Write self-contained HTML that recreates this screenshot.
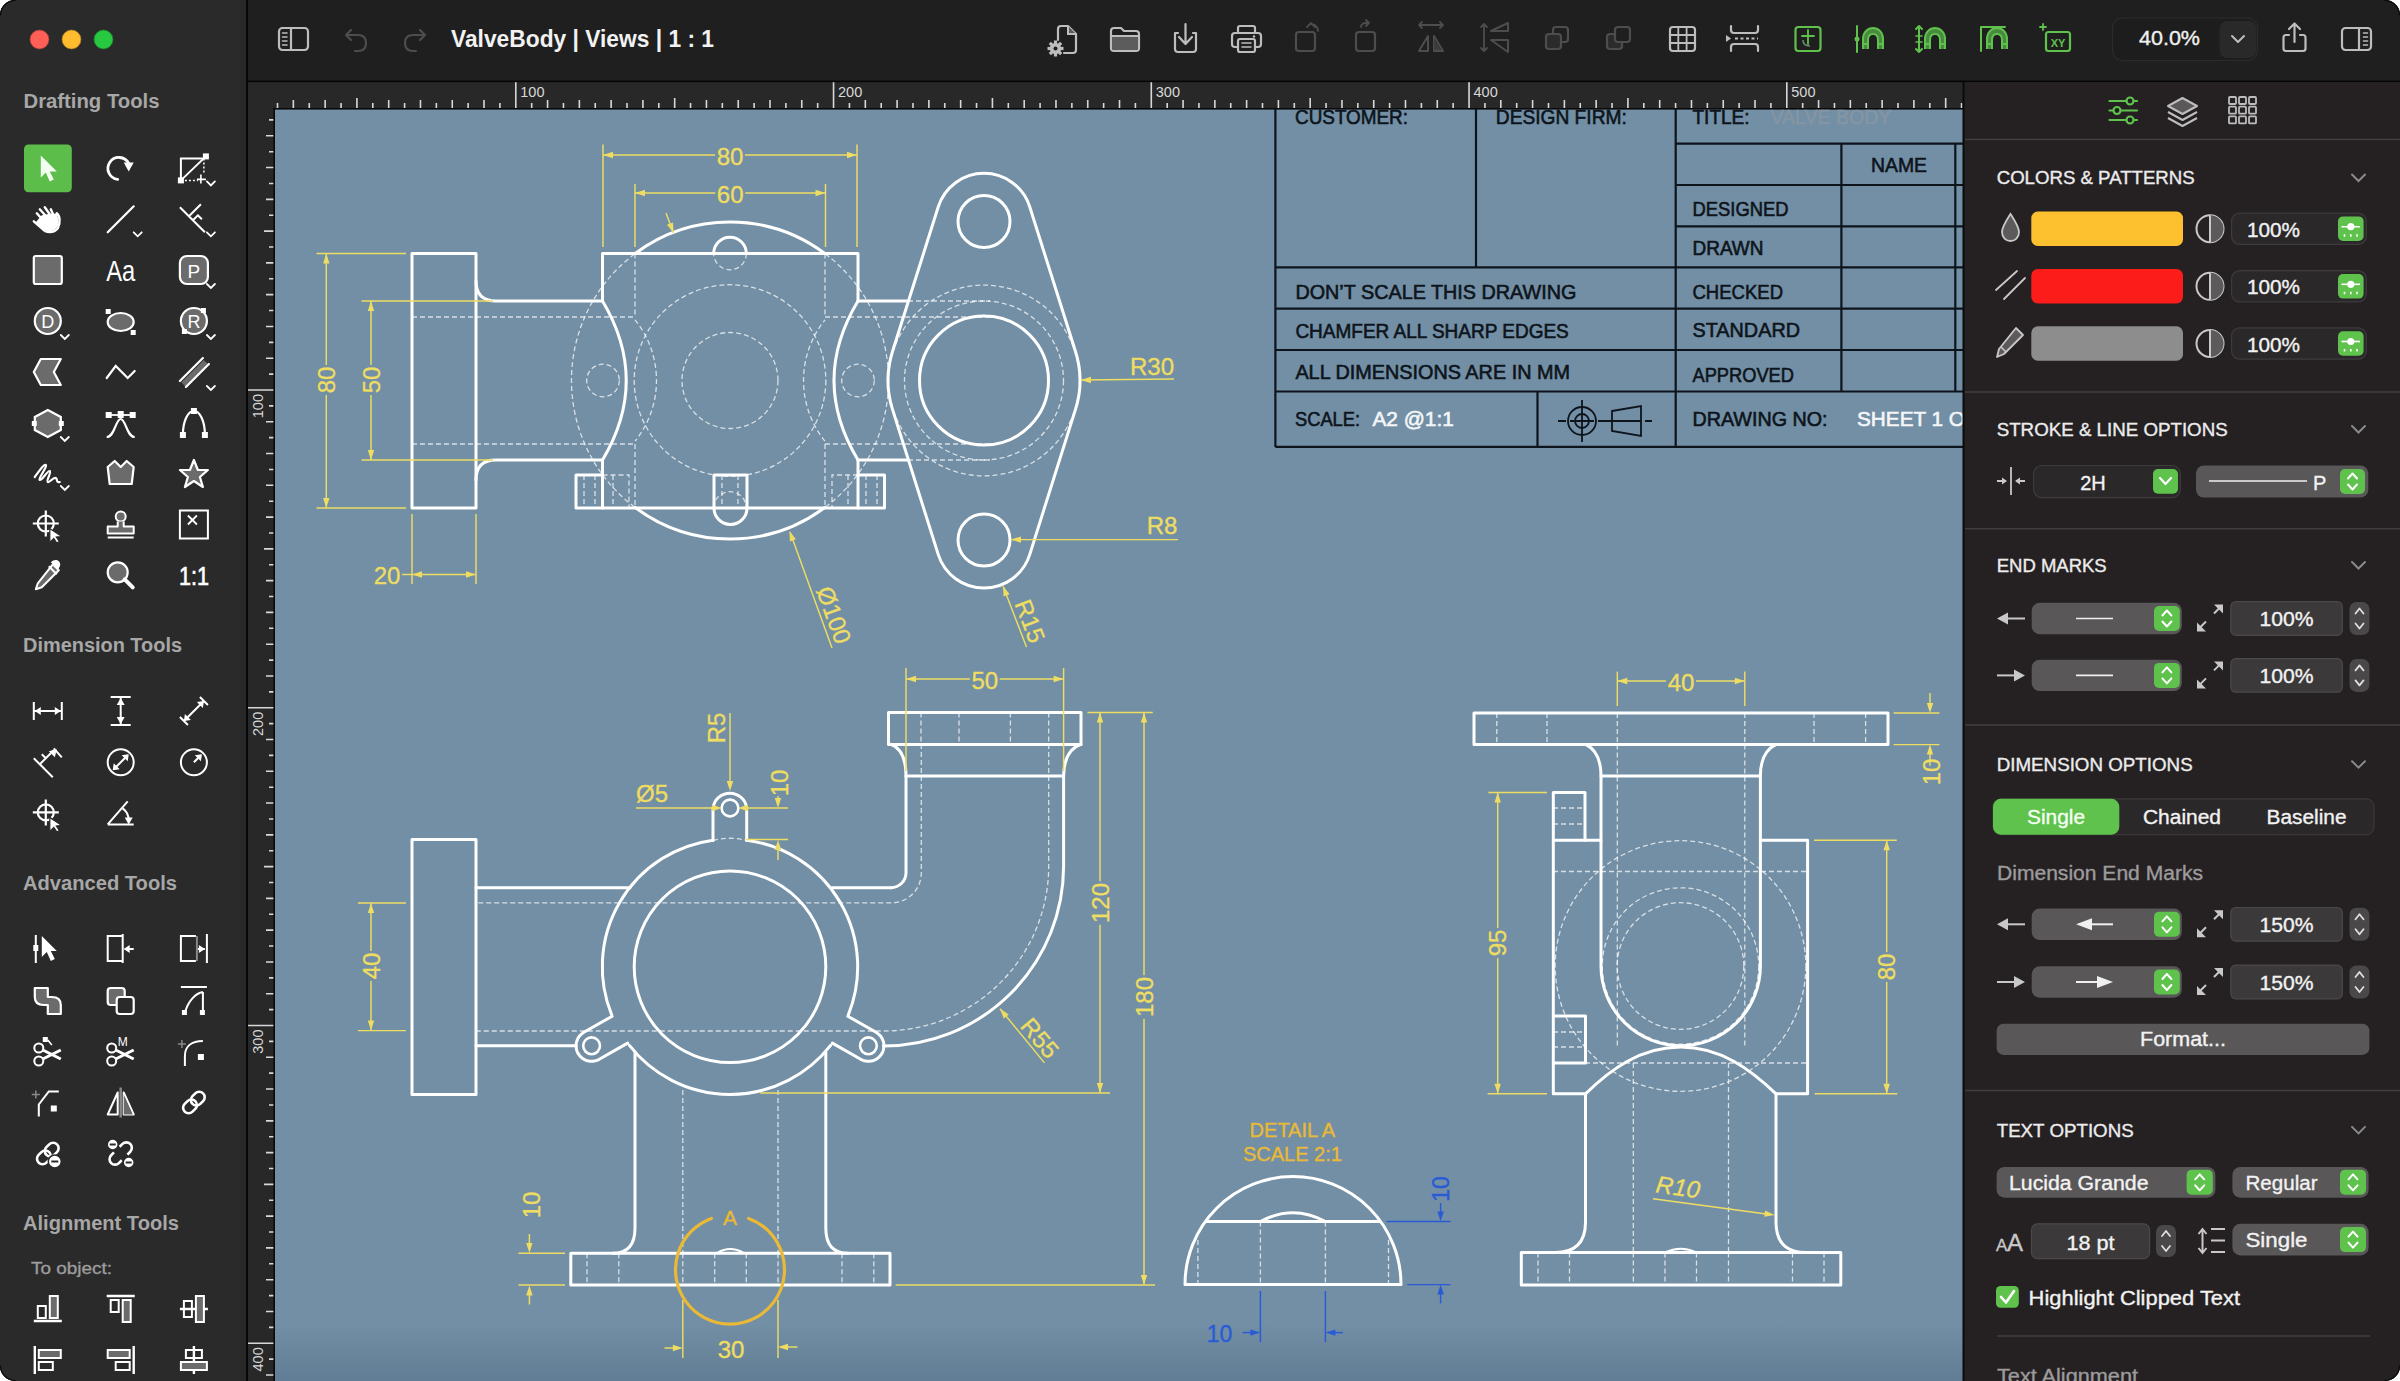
<!DOCTYPE html><html><head><meta charset="utf-8"><style>html,body{margin:0;padding:0;background:#fff;width:2400px;height:1381px;overflow:hidden}.d{stroke:rgba(255,255,255,0.72);stroke-width:1.3;stroke-dasharray:5 3;fill:none}svg,text{font-family:"Liberation Sans",sans-serif}</style></head><body><svg width="2400" height="1381" viewBox="0 0 2400 1381" font-family="Liberation Sans, sans-serif" style="display:block">
<defs><clipPath id="win"><rect x="0" y="0" width="2400" height="1381" rx="15"/></clipPath><linearGradient id="cg" x1="0" y1="0" x2="0" y2="1"><stop offset="0" stop-color="#728fa5"/><stop offset="0.955" stop-color="#728fa5"/><stop offset="1" stop-color="#607d95"/></linearGradient><clipPath id="cc"><rect x="275" y="109" width="1688" height="1272"/></clipPath></defs>
<rect width="2400" height="1381" fill="#fff"/>
<g clip-path="url(#win)">
<rect width="2400" height="1381" fill="#1f1f1f"/>
<rect x="247" y="82" width="1716" height="27" fill="#282828"/>
<rect x="247" y="82" width="28" height="1299" fill="#282828"/>
<rect x="275" y="109" width="1688" height="1272" fill="url(#cg)"/>
<text x="520.3" y="97.3" font-size="14.5" fill="#d8d8d8">100</text>
<text x="838.05" y="97.3" font-size="14.5" fill="#d8d8d8">200</text>
<text x="1155.8" y="97.3" font-size="14.5" fill="#d8d8d8">300</text>
<text x="1473.55" y="97.3" font-size="14.5" fill="#d8d8d8">400</text>
<text x="1791.3" y="97.3" font-size="14.5" fill="#d8d8d8">500</text>
<text x="0" y="0" font-size="14.5" fill="#d8d8d8" transform="translate(262.5 394) rotate(-90)" text-anchor="end">100</text>
<text x="0" y="0" font-size="14.5" fill="#d8d8d8" transform="translate(262.5 711.75) rotate(-90)" text-anchor="end">200</text>
<text x="0" y="0" font-size="14.5" fill="#d8d8d8" transform="translate(262.5 1029.5) rotate(-90)" text-anchor="end">300</text>
<text x="0" y="0" font-size="14.5" fill="#d8d8d8" transform="translate(262.5 1347.25) rotate(-90)" text-anchor="end">400</text>
<path d="M277.49 108V103 M293.37 108V100 M309.26 108V103 M325.15 108V100 M341.04 108V103 M356.92 108V98 M372.81 108V103 M388.7 108V100 M404.59 108V103 M420.47 108V100 M436.36 108V103 M452.25 108V100 M468.14 108V103 M484.02 108V100 M499.91 108V103 M515.8 108V82 M531.69 108V103 M547.57 108V100 M563.46 108V103 M579.35 108V100 M595.24 108V103 M611.12 108V100 M627.01 108V103 M642.9 108V100 M658.79 108V103 M674.67 108V98 M690.56 108V103 M706.45 108V100 M722.34 108V103 M738.22 108V100 M754.11 108V103 M770 108V100 M785.89 108V103 M801.77 108V100 M817.66 108V103 M833.55 108V82 M849.44 108V103 M865.32 108V100 M881.21 108V103 M897.1 108V100 M912.99 108V103 M928.87 108V100 M944.76 108V103 M960.65 108V100 M976.54 108V103 M992.42 108V98 M1008.31 108V103 M1024.2 108V100 M1040.09 108V103 M1055.97 108V100 M1071.86 108V103 M1087.75 108V100 M1103.64 108V103 M1119.52 108V100 M1135.41 108V103 M1151.3 108V82 M1167.19 108V103 M1183.07 108V100 M1198.96 108V103 M1214.85 108V100 M1230.74 108V103 M1246.62 108V100 M1262.51 108V103 M1278.4 108V100 M1294.29 108V103 M1310.17 108V98 M1326.06 108V103 M1341.95 108V100 M1357.84 108V103 M1373.72 108V100 M1389.61 108V103 M1405.5 108V100 M1421.39 108V103 M1437.27 108V100 M1453.16 108V103 M1469.05 108V82 M1484.94 108V103 M1500.82 108V100 M1516.71 108V103 M1532.6 108V100 M1548.49 108V103 M1564.38 108V100 M1580.26 108V103 M1596.15 108V100 M1612.04 108V103 M1627.92 108V98 M1643.81 108V103 M1659.7 108V100 M1675.59 108V103 M1691.47 108V100 M1707.36 108V103 M1723.25 108V100 M1739.14 108V103 M1755.02 108V100 M1770.91 108V103 M1786.8 108V82 M1802.69 108V103 M1818.57 108V100 M1834.46 108V103 M1850.35 108V100 M1866.24 108V103 M1882.12 108V100 M1898.01 108V103 M1913.9 108V100 M1929.79 108V103 M1945.67 108V98 M1961.56 108V103 M274 119.91H269 M274 135.8H266 M274 151.69H269 M274 167.57H266 M274 183.46H269 M274 199.35H266 M274 215.24H269 M274 231.12H264 M274 247.01H269 M274 262.9H266 M274 278.79H269 M274 294.67H266 M274 310.56H269 M274 326.45H266 M274 342.34H269 M274 358.22H266 M274 374.11H269 M274 390H247 M274 405.89H269 M274 421.77H266 M274 437.66H269 M274 453.55H266 M274 469.44H269 M274 485.32H266 M274 501.21H269 M274 517.1H266 M274 532.99H269 M274 548.88H264 M274 564.76H269 M274 580.65H266 M274 596.54H269 M274 612.42H266 M274 628.31H269 M274 644.2H266 M274 660.09H269 M274 675.98H266 M274 691.86H269 M274 707.75H247 M274 723.64H269 M274 739.52H266 M274 755.41H269 M274 771.3H266 M274 787.19H269 M274 803.07H266 M274 818.96H269 M274 834.85H266 M274 850.74H269 M274 866.62H264 M274 882.51H269 M274 898.4H266 M274 914.29H269 M274 930.17H266 M274 946.06H269 M274 961.95H266 M274 977.84H269 M274 993.72H266 M274 1009.61H269 M274 1025.5H247 M274 1041.39H269 M274 1057.28H266 M274 1073.16H269 M274 1089.05H266 M274 1104.94H269 M274 1120.83H266 M274 1136.71H269 M274 1152.6H266 M274 1168.49H269 M274 1184.38H264 M274 1200.26H269 M274 1216.15H266 M274 1232.04H269 M274 1247.92H266 M274 1263.81H269 M274 1279.7H266 M274 1295.59H269 M274 1311.47H266 M274 1327.36H269 M274 1343.25H247 M274 1359.14H269 M274 1375.02H266" stroke="#d8d8d8" stroke-width="1.6" fill="none"/>
<rect x="274" y="108" width="1689" height="1.6" fill="#0a0a0a"/>
<rect x="273.4" y="108" width="1.6" height="1273" fill="#0a0a0a"/>
<g clip-path="url(#cc)">
<g font-family="Liberation Sans, sans-serif">
<rect x="412" y="253.5" width="64" height="254.5" stroke="#ffffff" stroke-width="3" fill="none" stroke-linejoin="round"/>
<path d="M476 281 Q476 301 496 301 L602.5 301" stroke="#ffffff" stroke-width="3" fill="none" stroke-linejoin="round" stroke-linecap="round" />
<path d="M476 480 Q476 460 496 460 L602.5 460" stroke="#ffffff" stroke-width="3" fill="none" stroke-linejoin="round" stroke-linecap="round" />
<path d="M602.5 301 L602.5 253.5 L858 253.5 L858 301" stroke="#ffffff" stroke-width="3" fill="none" stroke-linejoin="round" stroke-linecap="round" />
<path d="M602.5 460 L602.5 508 L858 508 L858 460" stroke="#ffffff" stroke-width="3" fill="none" stroke-linejoin="round" stroke-linecap="round" />
<path d="M602.5 301 Q650 380.5 602.5 460" stroke="#ffffff" stroke-width="3" fill="none" stroke-linejoin="round" stroke-linecap="round" />
<path d="M858 301 Q810 380.5 858 460" stroke="#ffffff" stroke-width="3" fill="none" stroke-linejoin="round" stroke-linecap="round" />
<path d="M858 301 L908 301" stroke="#ffffff" stroke-width="3" fill="none" stroke-linejoin="round" stroke-linecap="round" />
<path d="M858 460 L908 460" stroke="#ffffff" stroke-width="3" fill="none" stroke-linejoin="round" stroke-linecap="round" />
<path d="M635.2 253.5A158.5 158.5 0 0 1 824.8 253.5" stroke="#ffffff" stroke-width="3" fill="none" stroke-linejoin="round" stroke-linecap="round" />
<path d="M824.8 507.5A158.5 158.5 0 0 1 635.2 507.5" stroke="#ffffff" stroke-width="3" fill="none" stroke-linejoin="round" stroke-linecap="round" />
<path d="M713.7 253.5A16.3 16.3 0 0 1 746.3 253.5" stroke="#ffffff" stroke-width="3" fill="none" stroke-linejoin="round" stroke-linecap="round" />
<path d="M746.3 253.5A16.3 16.3 0 0 1 713.7 253.5" class="d"/>
<path d="M714 508 L714 475 L747 475 L747 508 A16.5 16.5 0 0 1 714 508" stroke="#ffffff" stroke-width="3" fill="none" stroke-linejoin="round" stroke-linecap="round" />
<line x1="722" y1="475" x2="722" y2="508" class="d"/>
<line x1="738" y1="475" x2="738" y2="508" class="d"/>
<path d="M713.7 508A16.3 16.3 0 0 1 746.3 508" class="d"/>
<path d="M602.5 475 L576 475 L576 508 L602.5 508" stroke="#ffffff" stroke-width="3" fill="none" stroke-linejoin="round" stroke-linecap="round" />
<path d="M858 475 L884.5 475 L884.5 508 L858 508" stroke="#ffffff" stroke-width="3" fill="none" stroke-linejoin="round" stroke-linecap="round" />
<line x1="584" y1="475" x2="584" y2="508" class="d"/>
<line x1="595" y1="475" x2="595" y2="508" class="d"/>
<line x1="866" y1="475" x2="866" y2="508" class="d"/>
<line x1="877" y1="475" x2="877" y2="508" class="d"/>
<path d="M602.5 475 L629 475 L629 508" class="d"/>
<line x1="613" y1="475" x2="613" y2="508" class="d"/>
<path d="M858 475 L832 475 L832 508" class="d"/>
<line x1="848" y1="475" x2="848" y2="508" class="d"/>
<circle cx="730" cy="380.5" r="48" class="d"/>
<circle cx="730" cy="380.5" r="95.8" class="d"/>
<path d="M634.6 507.1A158.5 158.5 0 0 1 634.6 253.9" class="d"/>
<path d="M825.4 253.9A158.5 158.5 0 0 1 825.4 507.1" class="d"/>
<circle cx="603" cy="380.5" r="16.3" class="d"/>
<circle cx="858" cy="380.5" r="16.3" class="d"/>
<path d="M635 319.8A96.5 96.5 0 0 1 635 441.2" class="d"/>
<path d="M825 441.2A96.5 96.5 0 0 1 825 319.8" class="d"/>
<line x1="635" y1="253.5" x2="635" y2="317" class="d"/>
<line x1="635" y1="444" x2="635" y2="508" class="d"/>
<line x1="825" y1="253.5" x2="825" y2="317" class="d"/>
<line x1="825" y1="444" x2="825" y2="508" class="d"/>
<line x1="412" y1="317" x2="635" y2="317" class="d"/>
<line x1="412" y1="444" x2="635" y2="444" class="d"/>
<line x1="825" y1="317" x2="1000" y2="317" class="d"/>
<line x1="825" y1="444" x2="1000" y2="444" class="d"/>
<line x1="908" y1="301" x2="990" y2="301" class="d"/>
<line x1="908" y1="460" x2="990" y2="460" class="d"/>
<path d="M938.2 207A48 48 0 0 1 1029.8 207L1075.5 351.5A96 96 0 0 1 1075.5 409.4L1029.8 554.4A48 48 0 0 1 938.2 554.4L892.5 409.4A96 96 0 0 1 892.5 351.5Z" stroke="#ffffff" stroke-width="3" fill="none" stroke-linejoin="round" stroke-linecap="round" />
<circle cx="984" cy="221.5" r="26" stroke="#ffffff" stroke-width="3" fill="none"/>
<circle cx="984" cy="540" r="26" stroke="#ffffff" stroke-width="3" fill="none"/>
<circle cx="984" cy="380.5" r="64.5" stroke="#ffffff" stroke-width="3" fill="none"/>
<circle cx="984" cy="380.5" r="79.5" class="d"/>
<circle cx="984" cy="380.5" r="95.4" class="d"/>
<line x1="603" y1="144.5" x2="603" y2="247" stroke="#eedd62" stroke-width="1.45" stroke-linecap="butt"/>
<line x1="857" y1="144.5" x2="857" y2="247" stroke="#eedd62" stroke-width="1.45" stroke-linecap="butt"/>
<line x1="603" y1="155" x2="715.1" y2="155" stroke="#eedd62" stroke-width="1.45" stroke-linecap="butt"/>
<line x1="744.9" y1="155" x2="857" y2="155" stroke="#eedd62" stroke-width="1.45" stroke-linecap="butt"/>
<path d="M603 155L613 151.8L613 158.2Z" fill="#eedd62"/>
<path d="M857 155L847 158.2L847 151.8Z" fill="#eedd62"/>
<text x="730" y="156" font-size="24" fill="#eedd62" stroke="#eedd62" stroke-width="0.35" text-anchor="middle" dominant-baseline="central" >80</text>
<line x1="635" y1="184" x2="635" y2="247" stroke="#eedd62" stroke-width="1.45" stroke-linecap="butt"/>
<line x1="825.5" y1="184" x2="825.5" y2="247" stroke="#eedd62" stroke-width="1.45" stroke-linecap="butt"/>
<line x1="635" y1="193" x2="715.3" y2="193" stroke="#eedd62" stroke-width="1.45" stroke-linecap="butt"/>
<line x1="745.2" y1="193" x2="825.5" y2="193" stroke="#eedd62" stroke-width="1.45" stroke-linecap="butt"/>
<path d="M635 193L645 189.8L645 196.2Z" fill="#eedd62"/>
<path d="M825.5 193L815.5 196.2L815.5 189.8Z" fill="#eedd62"/>
<text x="730.2" y="194" font-size="24" fill="#eedd62" stroke="#eedd62" stroke-width="0.35" text-anchor="middle" dominant-baseline="central" >60</text>
<line x1="666" y1="213" x2="673.4" y2="232.7" stroke="#eedd62" stroke-width="1.45" stroke-linecap="butt"/>
<path d="M673.6 233L667 224.8L673 222.5Z" fill="#eedd62"/>
<line x1="316.5" y1="253.5" x2="406" y2="253.5" stroke="#eedd62" stroke-width="1.45" stroke-linecap="butt"/>
<line x1="316.5" y1="508" x2="406" y2="508" stroke="#eedd62" stroke-width="1.45" stroke-linecap="butt"/>
<line x1="326.3" y1="253.5" x2="326.3" y2="365.1" stroke="#eedd62" stroke-width="1.45" stroke-linecap="butt"/>
<line x1="326.3" y1="394.9" x2="326.3" y2="508" stroke="#eedd62" stroke-width="1.45" stroke-linecap="butt"/>
<path d="M326.3 253.5L329.5 263.5L323.1 263.5Z" fill="#eedd62"/>
<path d="M326.3 508L323.1 498L329.5 498Z" fill="#eedd62"/>
<text x="326.3" y="380" font-size="24" fill="#eedd62" stroke="#eedd62" stroke-width="0.35" text-anchor="middle" dominant-baseline="central" transform="rotate(-90 326.3 380)" >80</text>
<line x1="361.5" y1="301" x2="493" y2="301" stroke="#eedd62" stroke-width="1.45" stroke-linecap="butt"/>
<line x1="361.5" y1="460" x2="493" y2="460" stroke="#eedd62" stroke-width="1.45" stroke-linecap="butt"/>
<line x1="371" y1="301" x2="371" y2="365.1" stroke="#eedd62" stroke-width="1.45" stroke-linecap="butt"/>
<line x1="371" y1="394.9" x2="371" y2="460" stroke="#eedd62" stroke-width="1.45" stroke-linecap="butt"/>
<path d="M371 301L374.2 311L367.8 311Z" fill="#eedd62"/>
<path d="M371 460L367.8 450L374.2 450Z" fill="#eedd62"/>
<text x="371" y="380" font-size="24" fill="#eedd62" stroke="#eedd62" stroke-width="0.35" text-anchor="middle" dominant-baseline="central" transform="rotate(-90 371 380)" >50</text>
<line x1="412" y1="514" x2="412" y2="584" stroke="#eedd62" stroke-width="1.45" stroke-linecap="butt"/>
<line x1="476" y1="514" x2="476" y2="584" stroke="#eedd62" stroke-width="1.45" stroke-linecap="butt"/>
<line x1="412" y1="574.5" x2="476" y2="574.5" stroke="#eedd62" stroke-width="1.45" stroke-linecap="butt"/>
<path d="M412 574.5L422 571.3L422 577.7Z" fill="#eedd62"/>
<path d="M476 574.5L466 577.7L466 571.3Z" fill="#eedd62"/>
<line x1="402" y1="574.5" x2="412" y2="574.5" stroke="#eedd62" stroke-width="1.45" stroke-linecap="butt"/>
<text x="387" y="575.5" font-size="24" fill="#eedd62" stroke="#eedd62" stroke-width="0.35" text-anchor="middle" dominant-baseline="central" >20</text>
<line x1="790" y1="532" x2="832" y2="648" stroke="#eedd62" stroke-width="1.45" stroke-linecap="butt"/>
<path d="M789.5 531L795.9 539.3L789.9 541.5Z" fill="#eedd62"/>
<text x="834" y="615" font-size="24" fill="#eedd62" stroke="#eedd62" stroke-width="0.35" text-anchor="middle" dominant-baseline="central" transform="rotate(70 834 615)" >Ø100</text>
<line x1="1081" y1="380" x2="1174" y2="379" stroke="#eedd62" stroke-width="1.45" stroke-linecap="butt"/>
<path d="M1081 380L1091 376.8L1091 383.2Z" fill="#eedd62"/>
<text x="1152" y="366" font-size="24" fill="#eedd62" stroke="#eedd62" stroke-width="0.35" text-anchor="middle" dominant-baseline="central" >R30</text>
<line x1="1011" y1="539.6" x2="1178" y2="539.6" stroke="#eedd62" stroke-width="1.45" stroke-linecap="butt"/>
<path d="M1011 539.6L1021 536.4L1021 542.8Z" fill="#eedd62"/>
<text x="1162" y="525" font-size="24" fill="#eedd62" stroke="#eedd62" stroke-width="0.35" text-anchor="middle" dominant-baseline="central" >R8</text>
<line x1="1003" y1="586" x2="1026.5" y2="647" stroke="#eedd62" stroke-width="1.45" stroke-linecap="butt"/>
<path d="M1003 586L1009.6 594.2L1003.6 596.5Z" fill="#eedd62"/>
<text x="1030" y="621" font-size="24" fill="#eedd62" stroke="#eedd62" stroke-width="0.35" text-anchor="middle" dominant-baseline="central" transform="rotate(69 1030 621)" >R15</text>
<rect x="412" y="839.5" width="64" height="255" stroke="#ffffff" stroke-width="3" fill="none" stroke-linejoin="round"/>
<line x1="476" y1="887.7" x2="630" y2="887.7" stroke="#ffffff" stroke-width="3" stroke-linecap="round"/>
<line x1="476" y1="1045.8" x2="576" y2="1045.8" stroke="#ffffff" stroke-width="3" stroke-linecap="round"/>
<circle cx="730" cy="966.8" r="95.8" stroke="#ffffff" stroke-width="3" fill="none"/>
<path d="M746.7 840.2A127.7 127.7 0 0 1 848.4 1014.6" stroke="#ffffff" stroke-width="3" fill="none" stroke-linejoin="round" stroke-linecap="round" />
<path d="M830.6 1045.4A127.7 127.7 0 0 1 629.4 1045.4" stroke="#ffffff" stroke-width="3" fill="none" stroke-linejoin="round" stroke-linecap="round" />
<path d="M611.6 1014.6A127.7 127.7 0 0 1 713 840.2" stroke="#ffffff" stroke-width="3" fill="none" stroke-linejoin="round" stroke-linecap="round" />
<path d="M713 840.5 L713 808 A17 17 0 0 1 746.7 808 L746.7 840.5" stroke="#ffffff" stroke-width="3" fill="none" stroke-linejoin="round" stroke-linecap="round" />
<circle cx="730" cy="808" r="8.4" stroke="#ffffff" stroke-width="2.6" fill="none"/>
<path d="M713 840.5 Q730 836 746.7 840.5" class="d"/>
<path d="M627.6 1043.1 L599.3 1059.3 L598.1 1059.9 L596.8 1060.4 L595.5 1060.8 L594.2 1061.1 L592.9 1061.2 L591.5 1061.3 L590.2 1061.2 L588.8 1061.1 L587.5 1060.8 L586.2 1060.3 L585 1059.8 L583.8 1059.2 L582.6 1058.5 L581.6 1057.6 L580.6 1056.7 L579.7 1055.7 L578.9 1054.6 L578.1 1053.5 L577.5 1052.3 L577 1051 L576.6 1049.7 L576.3 1048.4 L576.2 1047.1 L576.1 1045.7 L576.2 1044.4 L576.3 1043 L576.6 1041.7 L577.1 1040.4 L577.6 1039.2 L578.2 1038 L578.9 1036.8 L579.8 1035.8 L580.7 1034.8 L581.7 1033.9 L582.8 1033.1 L583.9 1032.3 L612.2 1016.2" stroke="#ffffff" stroke-width="3" fill="none" stroke-linejoin="round" stroke-linecap="round" />
<circle cx="591.6" cy="1045.8" r="8.4" stroke="#ffffff" stroke-width="2.6" fill="none"/>
<path d="M847.8 1016.2 L876.1 1032.3 L877.2 1033.1 L878.3 1033.9 L879.3 1034.8 L880.2 1035.8 L881.1 1036.8 L881.8 1038 L882.4 1039.2 L882.9 1040.4 L883.4 1041.7 L883.7 1043 L883.8 1044.4 L883.9 1045.7 L883.8 1047.1 L883.7 1048.4 L883.4 1049.7 L883 1051 L882.5 1052.3 L881.9 1053.5 L881.1 1054.6 L880.3 1055.7 L879.4 1056.7 L878.4 1057.6 L877.4 1058.5 L876.2 1059.2 L875 1059.8 L873.8 1060.3 L872.5 1060.8 L871.2 1061.1 L869.8 1061.2 L868.5 1061.3 L867.1 1061.2 L865.8 1061.1 L864.5 1060.8 L863.2 1060.4 L861.9 1059.9 L860.7 1059.3 L832.4 1043.1" stroke="#ffffff" stroke-width="3" fill="none" stroke-linejoin="round" stroke-linecap="round" />
<circle cx="868.4" cy="1045.8" r="8.4" stroke="#ffffff" stroke-width="2.6" fill="none"/>
<path d="M635 1052 L635 1228 Q635 1253.3 613 1253.3" stroke="#ffffff" stroke-width="3" fill="none" stroke-linejoin="round" stroke-linecap="round" />
<path d="M825.8 1052 L825.8 1228 Q825.8 1253.3 848 1253.3" stroke="#ffffff" stroke-width="3" fill="none" stroke-linejoin="round" stroke-linecap="round" />
<rect x="570.8" y="1253.3" width="319.2" height="31.7" stroke="#ffffff" stroke-width="3" fill="none" stroke-linejoin="round"/>
<line x1="587" y1="1253.3" x2="587" y2="1285" class="d"/>
<line x1="618.8" y1="1253.3" x2="618.8" y2="1285" class="d"/>
<line x1="682.8" y1="1253.3" x2="682.8" y2="1285" class="d"/>
<line x1="714.7" y1="1253.3" x2="714.7" y2="1285" class="d"/>
<line x1="746.3" y1="1253.3" x2="746.3" y2="1285" class="d"/>
<line x1="778" y1="1253.3" x2="778" y2="1285" class="d"/>
<line x1="842" y1="1253.3" x2="842" y2="1285" class="d"/>
<line x1="873.8" y1="1253.3" x2="873.8" y2="1285" class="d"/>
<line x1="682.8" y1="1090" x2="682.8" y2="1253" class="d"/>
<line x1="778" y1="1090" x2="778" y2="1253" class="d"/>
<path d="M717 1253 Q730 1245 744 1253" stroke="#ffffff" stroke-width="2" fill="none" stroke-linejoin="round" stroke-linecap="round" />
<line x1="832" y1="887.7" x2="891" y2="887.7" stroke="#ffffff" stroke-width="3" stroke-linecap="round"/>
<path d="M891 887.7 A15 15 0 0 0 906 872.7 L906 776" stroke="#ffffff" stroke-width="3" fill="none" stroke-linejoin="round" stroke-linecap="round" />
<path d="M1063.6 776 L1063.6 866 A180 180 0 0 1 883.6 1046" stroke="#ffffff" stroke-width="3" fill="none" stroke-linejoin="round" stroke-linecap="round" />
<line x1="883.6" y1="1046" x2="884" y2="1046" stroke="#ffffff" stroke-width="3" stroke-linecap="round"/>
<rect x="888.5" y="712.5" width="192.5" height="31.9" stroke="#ffffff" stroke-width="3" fill="none" stroke-linejoin="round"/>
<path d="M891 744.4 Q906 750 906 776" stroke="#ffffff" stroke-width="3" fill="none" stroke-linejoin="round" stroke-linecap="round" />
<path d="M1081 744.4 Q1064 750 1063.6 776" stroke="#ffffff" stroke-width="3" fill="none" stroke-linejoin="round" stroke-linecap="round" />
<line x1="906" y1="776" x2="1063.6" y2="776" stroke="#ffffff" stroke-width="3" stroke-linecap="round"/>
<line x1="921" y1="712.5" x2="921" y2="744.4" class="d"/>
<line x1="959" y1="712.5" x2="959" y2="744.4" class="d"/>
<line x1="1010.4" y1="712.5" x2="1010.4" y2="744.4" class="d"/>
<line x1="1048.7" y1="712.5" x2="1048.7" y2="744.4" class="d"/>
<path d="M921.3 744 L921.3 872.7 A30 30 0 0 1 891.3 902.9 L476 902.9" class="d"/>
<path d="M1048.7 744 L1048.7 866 A165 165 0 0 1 883.7 1031 L476 1031" class="d"/>
<line x1="906" y1="668" x2="906" y2="771" stroke="#eedd62" stroke-width="1.45" stroke-linecap="butt"/>
<line x1="1063.6" y1="668" x2="1063.6" y2="771" stroke="#eedd62" stroke-width="1.45" stroke-linecap="butt"/>
<line x1="906" y1="679" x2="969.9" y2="679" stroke="#eedd62" stroke-width="1.45" stroke-linecap="butt"/>
<line x1="999.7" y1="679" x2="1063.6" y2="679" stroke="#eedd62" stroke-width="1.45" stroke-linecap="butt"/>
<path d="M906 679L916 675.8L916 682.2Z" fill="#eedd62"/>
<path d="M1063.6 679L1053.6 682.2L1053.6 675.8Z" fill="#eedd62"/>
<text x="984.8" y="680" font-size="24" fill="#eedd62" stroke="#eedd62" stroke-width="0.35" text-anchor="middle" dominant-baseline="central" >50</text>
<line x1="1087.5" y1="712.5" x2="1152.8" y2="712.5" stroke="#eedd62" stroke-width="1.45" stroke-linecap="butt"/>
<line x1="760" y1="1093" x2="1110" y2="1093" stroke="#eedd62" stroke-width="1.45" stroke-linecap="butt"/>
<line x1="1100" y1="712.5" x2="1100" y2="881.3" stroke="#eedd62" stroke-width="1.45" stroke-linecap="butt"/>
<line x1="1100" y1="924.7" x2="1100" y2="1093" stroke="#eedd62" stroke-width="1.45" stroke-linecap="butt"/>
<path d="M1100 712.5L1103.2 722.5L1096.8 722.5Z" fill="#eedd62"/>
<path d="M1100 1093L1096.8 1083L1103.2 1083Z" fill="#eedd62"/>
<text x="1100" y="903" font-size="24" fill="#eedd62" stroke="#eedd62" stroke-width="0.35" text-anchor="middle" dominant-baseline="central" transform="rotate(-90 1100 903)" >120</text>
<line x1="895.6" y1="1285" x2="1155" y2="1285" stroke="#eedd62" stroke-width="1.45" stroke-linecap="butt"/>
<line x1="1144" y1="712.5" x2="1144" y2="975.3" stroke="#eedd62" stroke-width="1.45" stroke-linecap="butt"/>
<line x1="1144" y1="1018.7" x2="1144" y2="1285" stroke="#eedd62" stroke-width="1.45" stroke-linecap="butt"/>
<path d="M1144 712.5L1147.2 722.5L1140.8 722.5Z" fill="#eedd62"/>
<path d="M1144 1285L1140.8 1275L1147.2 1275Z" fill="#eedd62"/>
<text x="1144" y="997" font-size="24" fill="#eedd62" stroke="#eedd62" stroke-width="0.35" text-anchor="middle" dominant-baseline="central" transform="rotate(-90 1144 997)" >180</text>
<line x1="1000" y1="1008.7" x2="1044.5" y2="1062.9" stroke="#eedd62" stroke-width="1.45" stroke-linecap="butt"/>
<path d="M1000 1008.7L1008.8 1014.5L1003.8 1018.5Z" fill="#eedd62"/>
<text x="1040" y="1038" font-size="24" fill="#eedd62" stroke="#eedd62" stroke-width="0.35" text-anchor="middle" dominant-baseline="central" transform="rotate(50 1040 1038)" >R55</text>
<line x1="730" y1="713" x2="730" y2="782" stroke="#eedd62" stroke-width="1.45" stroke-linecap="butt"/>
<path d="M730 791L726.8 781L733.2 781Z" fill="#eedd62"/>
<text x="716" y="728" font-size="24" fill="#eedd62" stroke="#eedd62" stroke-width="0.35" text-anchor="middle" dominant-baseline="central" transform="rotate(-90 716 728)" >R5</text>
<line x1="636" y1="808" x2="712" y2="808" stroke="#eedd62" stroke-width="1.45" stroke-linecap="butt"/>
<path d="M722 808L712 811.2L712 804.8Z" fill="#eedd62"/>
<line x1="748" y1="808" x2="788" y2="808" stroke="#eedd62" stroke-width="1.45" stroke-linecap="butt"/>
<path d="M738 808L748 804.8L748 811.2Z" fill="#eedd62"/>
<text x="652" y="793" font-size="24" fill="#eedd62" stroke="#eedd62" stroke-width="0.35" text-anchor="middle" dominant-baseline="central" >Ø5</text>
<line x1="746" y1="839.5" x2="788" y2="839.5" stroke="#eedd62" stroke-width="1.45" stroke-linecap="butt"/>
<line x1="778" y1="796" x2="778" y2="800" stroke="#eedd62" stroke-width="1.45" stroke-linecap="butt"/>
<path d="M778 808L774.8 798L781.2 798Z" fill="#eedd62"/>
<line x1="778" y1="848" x2="778" y2="860" stroke="#eedd62" stroke-width="1.45" stroke-linecap="butt"/>
<path d="M778 840L781.2 850L774.8 850Z" fill="#eedd62"/>
<text x="779" y="783" font-size="24" fill="#eedd62" stroke="#eedd62" stroke-width="0.35" text-anchor="middle" dominant-baseline="central" transform="rotate(-90 779 783)" >10</text>
<line x1="358" y1="902.9" x2="406" y2="902.9" stroke="#eedd62" stroke-width="1.45" stroke-linecap="butt"/>
<line x1="358" y1="1030.6" x2="406" y2="1030.6" stroke="#eedd62" stroke-width="1.45" stroke-linecap="butt"/>
<line x1="371" y1="902.9" x2="371" y2="951.1" stroke="#eedd62" stroke-width="1.45" stroke-linecap="butt"/>
<line x1="371" y1="980.9" x2="371" y2="1030.6" stroke="#eedd62" stroke-width="1.45" stroke-linecap="butt"/>
<path d="M371 902.9L374.2 912.9L367.8 912.9Z" fill="#eedd62"/>
<path d="M371 1030.6L367.8 1020.6L374.2 1020.6Z" fill="#eedd62"/>
<text x="371" y="966" font-size="24" fill="#eedd62" stroke="#eedd62" stroke-width="0.35" text-anchor="middle" dominant-baseline="central" transform="rotate(-90 371 966)" >40</text>
<line x1="518.5" y1="1253.3" x2="565" y2="1253.3" stroke="#eedd62" stroke-width="1.45" stroke-linecap="butt"/>
<line x1="518.5" y1="1285" x2="565" y2="1285" stroke="#eedd62" stroke-width="1.45" stroke-linecap="butt"/>
<line x1="529.4" y1="1234" x2="529.4" y2="1245" stroke="#eedd62" stroke-width="1.45" stroke-linecap="butt"/>
<path d="M529.4 1253L526.2 1243L532.6 1243Z" fill="#eedd62"/>
<line x1="529.4" y1="1293" x2="529.4" y2="1304.5" stroke="#eedd62" stroke-width="1.45" stroke-linecap="butt"/>
<path d="M529.4 1285.5L532.6 1295.5L526.2 1295.5Z" fill="#eedd62"/>
<text x="531" y="1205" font-size="24" fill="#eedd62" stroke="#eedd62" stroke-width="0.35" text-anchor="middle" dominant-baseline="central" transform="rotate(-90 531 1205)" >10</text>
<path d="M748.6 1218.4A54.5 54.5 0 1 1 711.4 1218.4" stroke="#eab935" stroke-width="3.2" fill="none" stroke-linejoin="round" stroke-linecap="round" />
<text x="730" y="1217" font-size="21" fill="#eab935" stroke="#eab935" stroke-width="0.35" text-anchor="middle" dominant-baseline="central" >A</text>
<line x1="682.8" y1="1300" x2="682.8" y2="1358" stroke="#eedd62" stroke-width="1.45" stroke-linecap="butt"/>
<line x1="778" y1="1300" x2="778" y2="1358" stroke="#eedd62" stroke-width="1.45" stroke-linecap="butt"/>
<line x1="664.5" y1="1348" x2="674" y2="1348" stroke="#eedd62" stroke-width="1.45" stroke-linecap="butt"/>
<path d="M682.8 1348L672.8 1351.2L672.8 1344.8Z" fill="#eedd62"/>
<line x1="787" y1="1347" x2="797.5" y2="1347" stroke="#eedd62" stroke-width="1.45" stroke-linecap="butt"/>
<path d="M778 1347L788 1343.8L788 1350.2Z" fill="#eedd62"/>
<text x="731" y="1349" font-size="24" fill="#eedd62" stroke="#eedd62" stroke-width="0.35" text-anchor="middle" dominant-baseline="central" >30</text>
<rect x="1474" y="713" width="414" height="31.6" stroke="#ffffff" stroke-width="3" fill="none" stroke-linejoin="round"/>
<line x1="1496.8" y1="713" x2="1496.8" y2="744.6" class="d"/>
<line x1="1547" y1="713" x2="1547" y2="744.6" class="d"/>
<line x1="1617.3" y1="713" x2="1617.3" y2="744.6" class="d"/>
<line x1="1744.8" y1="713" x2="1744.8" y2="744.6" class="d"/>
<line x1="1814" y1="713" x2="1814" y2="744.6" class="d"/>
<line x1="1865.6" y1="713" x2="1865.6" y2="744.6" class="d"/>
<path d="M1586 744.6 Q1601 752 1601 776 L1601 966 A79.7 79.7 0 0 0 1760.4 966 L1760.4 776 Q1760.4 752 1775.8 744.6" stroke="#ffffff" stroke-width="3" fill="none" stroke-linejoin="round" stroke-linecap="round" />
<line x1="1601" y1="776" x2="1760.4" y2="776" stroke="#ffffff" stroke-width="3" stroke-linecap="round"/>
<line x1="1617.3" y1="744.6" x2="1617.3" y2="1046" class="d"/>
<line x1="1744.8" y1="744.6" x2="1744.8" y2="1046" class="d"/>
<path d="M1601 840.2 L1553.3 840.2 L1553.3 1093.8 L1585.5 1093.8" stroke="#ffffff" stroke-width="3" fill="none" stroke-linejoin="round" stroke-linecap="round" />
<path d="M1553.3 840.2 L1553.3 792.4 L1585 792.4 L1585 840.2" stroke="#ffffff" stroke-width="3" fill="none" stroke-linejoin="round" stroke-linecap="round" />
<path d="M1553.3 1016 L1585.5 1016 L1585.5 1063 L1553.3 1063" stroke="#ffffff" stroke-width="3" fill="none" stroke-linejoin="round" stroke-linecap="round" />
<path d="M1760.4 840.2 L1807.6 840.2 L1807.6 1093.8 L1776 1093.8" stroke="#ffffff" stroke-width="3" fill="none" stroke-linejoin="round" stroke-linecap="round" />
<line x1="1553" y1="871.5" x2="1807.6" y2="871.5" class="d"/>
<line x1="1553" y1="1063" x2="1807.6" y2="1063" class="d"/>
<line x1="1553" y1="808" x2="1585" y2="808" class="d"/>
<line x1="1553" y1="824" x2="1585" y2="824" class="d"/>
<line x1="1553" y1="1032" x2="1585" y2="1032" class="d"/>
<line x1="1553" y1="1047" x2="1585" y2="1047" class="d"/>
<circle cx="1680.5" cy="966" r="125.3" class="d"/>
<circle cx="1680.5" cy="966" r="78.2" class="d"/>
<circle cx="1680.5" cy="966" r="63.3" class="d"/>
<path d="M1585.5 1093.8 C1610 1070 1640 1047 1680.8 1047 C1721 1047 1751 1070 1776 1093.8" stroke="#ffffff" stroke-width="3" fill="none" stroke-linejoin="round" stroke-linecap="round" />
<path d="M1585.5 1093.8 L1585.5 1222 Q1585.5 1252.5 1555 1252.5" stroke="#ffffff" stroke-width="3" fill="none" stroke-linejoin="round" stroke-linecap="round" />
<path d="M1776 1093.8 L1776 1222 Q1776 1252.5 1806 1252.5" stroke="#ffffff" stroke-width="3" fill="none" stroke-linejoin="round" stroke-linecap="round" />
<rect x="1521.3" y="1252.5" width="319.5" height="32.5" stroke="#ffffff" stroke-width="3" fill="none" stroke-linejoin="round"/>
<line x1="1538" y1="1252.5" x2="1538" y2="1285" class="d"/>
<line x1="1569.5" y1="1252.5" x2="1569.5" y2="1285" class="d"/>
<line x1="1633.3" y1="1252.5" x2="1633.3" y2="1285" class="d"/>
<line x1="1665" y1="1252.5" x2="1665" y2="1285" class="d"/>
<line x1="1696.5" y1="1252.5" x2="1696.5" y2="1285" class="d"/>
<line x1="1728.5" y1="1252.5" x2="1728.5" y2="1285" class="d"/>
<line x1="1792.5" y1="1252.5" x2="1792.5" y2="1285" class="d"/>
<line x1="1824" y1="1252.5" x2="1824" y2="1285" class="d"/>
<line x1="1633.3" y1="1063" x2="1633.3" y2="1252.5" class="d"/>
<line x1="1728.5" y1="1063" x2="1728.5" y2="1252.5" class="d"/>
<path d="M1665 1252.5 Q1680.8 1245 1696.5 1252.5" stroke="#ffffff" stroke-width="2" fill="none" stroke-linejoin="round" stroke-linecap="round" />
<line x1="1617.3" y1="671.6" x2="1617.3" y2="706" stroke="#eedd62" stroke-width="1.45" stroke-linecap="butt"/>
<line x1="1744.8" y1="671.6" x2="1744.8" y2="706" stroke="#eedd62" stroke-width="1.45" stroke-linecap="butt"/>
<line x1="1617.3" y1="681" x2="1666.1" y2="681" stroke="#eedd62" stroke-width="1.45" stroke-linecap="butt"/>
<line x1="1696" y1="681" x2="1744.8" y2="681" stroke="#eedd62" stroke-width="1.45" stroke-linecap="butt"/>
<path d="M1617.3 681L1627.3 677.8L1627.3 684.2Z" fill="#eedd62"/>
<path d="M1744.8 681L1734.8 684.2L1734.8 677.8Z" fill="#eedd62"/>
<text x="1681" y="682" font-size="24" fill="#eedd62" stroke="#eedd62" stroke-width="0.35" text-anchor="middle" dominant-baseline="central" >40</text>
<line x1="1893.6" y1="713" x2="1939.4" y2="713" stroke="#eedd62" stroke-width="1.45" stroke-linecap="butt"/>
<line x1="1893.6" y1="744.6" x2="1939.4" y2="744.6" stroke="#eedd62" stroke-width="1.45" stroke-linecap="butt"/>
<line x1="1930" y1="693" x2="1930" y2="703" stroke="#eedd62" stroke-width="1.45" stroke-linecap="butt"/>
<path d="M1930 713L1926.8 703L1933.2 703Z" fill="#eedd62"/>
<line x1="1930" y1="754" x2="1930" y2="765.7" stroke="#eedd62" stroke-width="1.45" stroke-linecap="butt"/>
<path d="M1930 744.6L1933.2 754.6L1926.8 754.6Z" fill="#eedd62"/>
<text x="1931" y="772" font-size="24" fill="#eedd62" stroke="#eedd62" stroke-width="0.35" text-anchor="middle" dominant-baseline="central" transform="rotate(-90 1931 772)" >10</text>
<line x1="1488.4" y1="792.4" x2="1547" y2="792.4" stroke="#eedd62" stroke-width="1.45" stroke-linecap="butt"/>
<line x1="1487.6" y1="1093.8" x2="1547" y2="1093.8" stroke="#eedd62" stroke-width="1.45" stroke-linecap="butt"/>
<line x1="1497.7" y1="792.4" x2="1497.7" y2="928.1" stroke="#eedd62" stroke-width="1.45" stroke-linecap="butt"/>
<line x1="1497.7" y1="957.9" x2="1497.7" y2="1093.8" stroke="#eedd62" stroke-width="1.45" stroke-linecap="butt"/>
<path d="M1497.7 792.4L1500.9 802.4L1494.5 802.4Z" fill="#eedd62"/>
<path d="M1497.7 1093.8L1494.5 1083.8L1500.9 1083.8Z" fill="#eedd62"/>
<text x="1497.7" y="943" font-size="24" fill="#eedd62" stroke="#eedd62" stroke-width="0.35" text-anchor="middle" dominant-baseline="central" transform="rotate(-90 1497.7 943)" >95</text>
<line x1="1814" y1="840.2" x2="1896.8" y2="840.2" stroke="#eedd62" stroke-width="1.45" stroke-linecap="butt"/>
<line x1="1814.6" y1="1093.8" x2="1897.4" y2="1093.8" stroke="#eedd62" stroke-width="1.45" stroke-linecap="butt"/>
<line x1="1886.7" y1="840.2" x2="1886.7" y2="952.1" stroke="#eedd62" stroke-width="1.45" stroke-linecap="butt"/>
<line x1="1886.7" y1="981.9" x2="1886.7" y2="1093.8" stroke="#eedd62" stroke-width="1.45" stroke-linecap="butt"/>
<path d="M1886.7 840.2L1889.9 850.2L1883.5 850.2Z" fill="#eedd62"/>
<path d="M1886.7 1093.8L1883.5 1083.8L1889.9 1083.8Z" fill="#eedd62"/>
<text x="1886.7" y="967" font-size="24" fill="#eedd62" stroke="#eedd62" stroke-width="0.35" text-anchor="middle" dominant-baseline="central" transform="rotate(-90 1886.7 967)" >80</text>
<line x1="1653" y1="1198.7" x2="1770" y2="1214.5" stroke="#eedd62" stroke-width="1.45" stroke-linecap="butt"/>
<path d="M1774.6 1215L1764.3 1216.8L1765.1 1210.4Z" fill="#eedd62"/>
<text x="1678" y="1187" font-size="24" fill="#eedd62" stroke="#eedd62" stroke-width="0.35" text-anchor="middle" dominant-baseline="central" transform="rotate(8 1678 1187)" font-style="italic">R10</text>
<path d="M1185 1284.6 A108 108 0 0 1 1401 1284.6 Z" stroke="#ffffff" stroke-width="3" fill="none" stroke-linejoin="round" stroke-linecap="round" />
<line x1="1206.7" y1="1221.5" x2="1379" y2="1221.5" stroke="#ffffff" stroke-width="3" stroke-linecap="round"/>
<path d="M1260.4 1221.5 Q1293 1204 1325.4 1221.5" stroke="#ffffff" stroke-width="3" fill="none" stroke-linejoin="round" stroke-linecap="round" />
<line x1="1260.4" y1="1221.5" x2="1260.4" y2="1284.6" class="d"/>
<line x1="1325.4" y1="1221.5" x2="1325.4" y2="1284.6" class="d"/>
<line x1="1197.9" y1="1240" x2="1197.9" y2="1284.6" class="d"/>
<line x1="1388.5" y1="1240" x2="1388.5" y2="1284.6" class="d"/>
<text x="1292.4" y="1130" font-size="20" fill="#eab935" stroke="#eab935" stroke-width="0.35" text-anchor="middle" dominant-baseline="central" >DETAIL A</text>
<text x="1292.4" y="1154" font-size="20" fill="#eab935" stroke="#eab935" stroke-width="0.35" text-anchor="middle" dominant-baseline="central" >SCALE 2:1</text>
<line x1="1386.6" y1="1221.5" x2="1450.6" y2="1221.5" stroke="#2a5bd6" stroke-width="1.45" stroke-linecap="butt"/>
<line x1="1407.3" y1="1284.6" x2="1450.6" y2="1284.6" stroke="#2a5bd6" stroke-width="1.45" stroke-linecap="butt"/>
<line x1="1440.6" y1="1203" x2="1440.6" y2="1212" stroke="#2a5bd6" stroke-width="1.45" stroke-linecap="butt"/>
<path d="M1440.6 1221.5L1437.4 1211.5L1443.8 1211.5Z" fill="#2a5bd6"/>
<line x1="1440.6" y1="1294" x2="1440.6" y2="1303.4" stroke="#2a5bd6" stroke-width="1.45" stroke-linecap="butt"/>
<path d="M1440.6 1284.6L1443.8 1294.6L1437.4 1294.6Z" fill="#2a5bd6"/>
<text x="1441" y="1189" font-size="23" fill="#2a5bd6" stroke="#2a5bd6" stroke-width="0.35" text-anchor="middle" dominant-baseline="central" transform="rotate(-90 1441 1189)" >10</text>
<line x1="1260.4" y1="1291" x2="1260.4" y2="1342" stroke="#2a5bd6" stroke-width="1.45" stroke-linecap="butt"/>
<line x1="1325.4" y1="1291" x2="1325.4" y2="1342" stroke="#2a5bd6" stroke-width="1.45" stroke-linecap="butt"/>
<line x1="1242.5" y1="1332.6" x2="1251" y2="1332.6" stroke="#2a5bd6" stroke-width="1.45" stroke-linecap="butt"/>
<path d="M1260.4 1332.6L1250.4 1335.8L1250.4 1329.4Z" fill="#2a5bd6"/>
<line x1="1334" y1="1332.6" x2="1343" y2="1332.6" stroke="#2a5bd6" stroke-width="1.45" stroke-linecap="butt"/>
<path d="M1325.4 1332.6L1335.4 1329.4L1335.4 1335.8Z" fill="#2a5bd6"/>
<text x="1219.5" y="1334" font-size="23" fill="#2a5bd6" stroke="#2a5bd6" stroke-width="0.35" text-anchor="middle" dominant-baseline="central" >10</text>
</g>
<path d="M1275.4 100L1275.4 447 M1476 100L1476 267.3 M1675.7 100L1675.7 447 M1675.7 143.6L1975 143.6 M1841.4 143.6L1841.4 391.5 M1955.3 143.6L1955.3 391.5 M1675.7 185L1975 185 M1675.7 226.4L1975 226.4 M1275.4 267.3L1975 267.3 M1275.4 308.7L1975 308.7 M1275.4 350L1975 350 M1275.4 391.5L1975 391.5 M1275.4 446.9L1975 446.9 M1537.5 391.5L1537.5 446.9" stroke="#0e141b" stroke-width="2.2" fill="none"/>
<text x="1295" y="124.4" font-size="20.3" fill="#0e141b" stroke="#0e141b" stroke-width="0.6" text-anchor="start" textLength="113" lengthAdjust="spacingAndGlyphs">CUSTOMER:</text>
<text x="1495.8" y="124.4" font-size="20.3" fill="#0e141b" stroke="#0e141b" stroke-width="0.6" text-anchor="start" textLength="131" lengthAdjust="spacingAndGlyphs">DESIGN FIRM:</text>
<text x="1692.5" y="124.4" font-size="20.3" fill="#0e141b" stroke="#0e141b" stroke-width="0.6" text-anchor="start" textLength="57" lengthAdjust="spacingAndGlyphs">TITLE:</text>
<text x="1770.4" y="124.4" font-size="20.3" fill="#8595a3" stroke="#8595a3" stroke-width="0.6" text-anchor="start" textLength="121" lengthAdjust="spacingAndGlyphs">VALVE BODY</text>
<text x="1871" y="171.5" font-size="20.3" fill="#0e141b" stroke="#0e141b" stroke-width="0.6" text-anchor="start" textLength="56" lengthAdjust="spacingAndGlyphs">NAME</text>
<text x="1692.5" y="216" font-size="20.3" fill="#0e141b" stroke="#0e141b" stroke-width="0.6" text-anchor="start" textLength="96" lengthAdjust="spacingAndGlyphs">DESIGNED</text>
<text x="1692.5" y="254.6" font-size="20.3" fill="#0e141b" stroke="#0e141b" stroke-width="0.6" text-anchor="start" textLength="71" lengthAdjust="spacingAndGlyphs">DRAWN</text>
<text x="1692.5" y="299" font-size="20.3" fill="#0e141b" stroke="#0e141b" stroke-width="0.6" text-anchor="start" textLength="90.5" lengthAdjust="spacingAndGlyphs">CHECKED</text>
<text x="1692.5" y="337.4" font-size="20.3" fill="#0e141b" stroke="#0e141b" stroke-width="0.6" text-anchor="start" textLength="107.5" lengthAdjust="spacingAndGlyphs">STANDARD</text>
<text x="1692.5" y="381.8" font-size="20.3" fill="#0e141b" stroke="#0e141b" stroke-width="0.6" text-anchor="start" textLength="101.5" lengthAdjust="spacingAndGlyphs">APPROVED</text>
<text x="1295.4" y="298.9" font-size="20.3" fill="#0e141b" stroke="#0e141b" stroke-width="0.6" text-anchor="start" textLength="281" lengthAdjust="spacingAndGlyphs">DON’T SCALE THIS DRAWING</text>
<text x="1295.4" y="338.3" font-size="20.3" fill="#0e141b" stroke="#0e141b" stroke-width="0.6" text-anchor="start" textLength="273.4" lengthAdjust="spacingAndGlyphs">CHAMFER ALL SHARP EDGES</text>
<text x="1295.4" y="378.5" font-size="20.3" fill="#0e141b" stroke="#0e141b" stroke-width="0.6" text-anchor="start" textLength="274.6" lengthAdjust="spacingAndGlyphs">ALL DIMENSIONS ARE IN MM</text>
<text x="1295" y="426" font-size="20.3" fill="#0e141b" stroke="#0e141b" stroke-width="0.6" text-anchor="start" textLength="65" lengthAdjust="spacingAndGlyphs">SCALE:</text>
<text x="1372.4" y="426" font-size="20.3" fill="#f4f6f8" stroke="#f4f6f8" stroke-width="0.6" text-anchor="start" textLength="81.4" lengthAdjust="spacingAndGlyphs">A2 @1:1</text>
<text x="1692.5" y="426" font-size="20.3" fill="#0e141b" stroke="#0e141b" stroke-width="0.6" text-anchor="start" textLength="135" lengthAdjust="spacingAndGlyphs">DRAWING NO:</text>
<text x="1857" y="426" font-size="20.3" fill="#f4f6f8" stroke="#f4f6f8" stroke-width="0.6" text-anchor="start" textLength="138" lengthAdjust="spacingAndGlyphs">SHEET 1 OF 1</text>
<g stroke="#0e141b" stroke-width="1.8" fill="none"><circle cx="1582" cy="421" r="14"/><circle cx="1582" cy="421" r="7"/><path d="M1582 400V442M1558 421H1566M1570 421H1594M1598 421H1612M1612 411L1641 406V436L1612 431ZM1612 421H1641M1645 421H1652"/></g>
</g>
<rect x="247" y="0" width="2153" height="81" fill="#1f1f1f"/>
<rect x="247" y="80.6" width="2153" height="1.6" fill="#050505"/>
<rect x="279" y="28" width="29" height="22" rx="3.5" stroke="#bdbdbd" stroke-width="2.2" fill="none" stroke-linecap="round" stroke-linejoin="round"/><path d="M291 28V50" stroke="#bdbdbd" stroke-width="2.2" fill="none" stroke-linecap="round" stroke-linejoin="round"/><path d="M282.5 33H287M282.5 37H287M282.5 41H287M282.5 45H287" stroke="#bdbdbd" stroke-width="1.6" fill="none" stroke-linecap="round" stroke-linejoin="round"/>
<path d="M346 35H358C363 35 366 38 366 43C366 48 363 51 358 51H355M346 35L351 30M346 35L351 40" stroke="#4d4d4d" stroke-width="2.2" fill="none" stroke-linecap="round" stroke-linejoin="round"/>
<path d="M425 35H413C408 35 405 38 405 43C405 48 408 51 413 51H416M425 35L420 30M425 35L420 40" stroke="#4d4d4d" stroke-width="2.2" fill="none" stroke-linecap="round" stroke-linejoin="round"/>
<text x="451" y="47.4" font-size="24" fill="#f2f2f2" text-anchor="start" font-weight="bold" textLength="263" lengthAdjust="spacingAndGlyphs" >ValveBody | Views | 1 : 1</text>
<path d="M1058 40V29C1058 27 1059 26 1061 26H1068L1076 34V50C1076 52 1075 53 1073 53H1064" stroke="#bdbdbd" stroke-width="2.2" fill="none" stroke-linecap="round" stroke-linejoin="round"/><path d="M1068 26V34H1076" stroke="#bdbdbd" stroke-width="2" fill="#5a5a5a"/>
<g transform="translate(1055.5 48.5)" fill="#bdbdbd"><circle r="5.6"/><rect x="-1.6" y="-8" width="3.2" height="4" transform="rotate(0)"/><rect x="-1.6" y="-8" width="3.2" height="4" transform="rotate(45)"/><rect x="-1.6" y="-8" width="3.2" height="4" transform="rotate(90)"/><rect x="-1.6" y="-8" width="3.2" height="4" transform="rotate(135)"/><rect x="-1.6" y="-8" width="3.2" height="4" transform="rotate(180)"/><rect x="-1.6" y="-8" width="3.2" height="4" transform="rotate(225)"/><rect x="-1.6" y="-8" width="3.2" height="4" transform="rotate(270)"/><rect x="-1.6" y="-8" width="3.2" height="4" transform="rotate(315)"/><circle r="2" fill="#1f1f1f"/></g>
<path d="M1111 31C1111 29 1112 28 1114 28H1121L1124 31H1136C1138 31 1139 32 1139 34V48C1139 50 1138 51 1136 51H1114C1112 51 1111 50 1111 48Z" stroke="#bdbdbd" stroke-width="2.2" fill="none" stroke-linecap="round" stroke-linejoin="round"/><path d="M1112 37H1138V48C1138 49 1137 50 1136 50H1114C1113 50 1112 49 1112 48Z" fill="#5c5c5c"/><path d="M1111 36H1139" stroke="#bdbdbd" stroke-width="2" fill="none" stroke-linecap="round" stroke-linejoin="round"/>
<path d="M1178 33H1175V49C1175 51 1176 52 1178 52H1193C1195 52 1196 51 1196 49V33H1193" stroke="#bdbdbd" stroke-width="2.2" fill="none" stroke-linecap="round" stroke-linejoin="round"/><path d="M1185.5 24V43M1179 37L1185.5 44L1192 37" stroke="#bdbdbd" stroke-width="2.2" fill="none" stroke-linecap="round" stroke-linejoin="round"/>
<path d="M1238 33V28C1238 27 1239 26 1240 26H1253C1254 26 1255 27 1255 28V33" stroke="#bdbdbd" stroke-width="2.2" fill="none" stroke-linecap="round" stroke-linejoin="round"/><path d="M1238 47H1235C1233 47 1232 46 1232 44V36C1232 34 1233 33 1235 33H1258C1260 33 1261 34 1261 36V44C1261 46 1260 47 1258 47H1255" stroke="#bdbdbd" stroke-width="2.2" fill="none" stroke-linecap="round" stroke-linejoin="round"/><rect x="1238" y="39" width="17" height="13" rx="2" stroke="#bdbdbd" stroke-width="2.2" fill="none" stroke-linecap="round" stroke-linejoin="round"/><path d="M1242 43H1251M1242 47H1251" stroke="#bdbdbd" stroke-width="1.6" fill="none" stroke-linecap="round" stroke-linejoin="round"/><circle cx="1254" cy="36.5" r="1.2" fill="#bdbdbd"/>
<rect x="1296" y="32" width="19" height="19" rx="3" stroke="#4d4d4d" stroke-width="2.2" fill="none" stroke-linecap="round" stroke-linejoin="round"/><path d="M1307 27L1311 23L1315 27M1311 24C1314 24 1318 26 1318 31" stroke="#4d4d4d" stroke-width="1.8" fill="none" stroke-linecap="round" stroke-linejoin="round"/>
<rect x="1356" y="32" width="19" height="19" rx="3" stroke="#4d4d4d" stroke-width="2.2" fill="none" stroke-linecap="round" stroke-linejoin="round"/><path d="M1361 27C1361 25 1363 23 1366 23H1368M1366 20L1369 23L1366 26" stroke="#4d4d4d" stroke-width="1.8" fill="none" stroke-linecap="round" stroke-linejoin="round"/>
<path d="M1428 36L1419 51H1428Z M1434 36L1443 51H1434Z" stroke="#4d4d4d" stroke-width="2" fill="none" stroke-linecap="round" stroke-linejoin="round"/><path d="M1434 38L1441 50H1434Z" fill="#3c3c3c"/><path d="M1419 25H1443M1419 25L1422 22M1419 25L1422 28M1443 25L1440 22M1443 25L1440 28" stroke="#4d4d4d" stroke-width="1.8" fill="none" stroke-linecap="round" stroke-linejoin="round"/>
<path d="M1508 23L1491 31H1508Z M1508 52L1491 40H1508Z" stroke="#4d4d4d" stroke-width="2" fill="none" stroke-linecap="round" stroke-linejoin="round"/><path d="M1484 24V51M1481 27L1484 24L1487 27M1481 48L1484 51L1487 48" stroke="#4d4d4d" stroke-width="1.8" fill="none" stroke-linecap="round" stroke-linejoin="round"/>
<rect x="1553" y="27" width="15" height="15" rx="3" stroke="#4d4d4d" stroke-width="2.2" fill="none" stroke-linecap="round" stroke-linejoin="round"/><rect x="1546" y="34" width="15" height="15" rx="3" fill="#2b2b2b" stroke="#4d4d4d" stroke-width="2.2"/>
<rect x="1607" y="34" width="15" height="15" rx="3" fill="#2b2b2b" stroke="#4d4d4d" stroke-width="2.2"/><rect x="1615" y="27" width="15" height="15" rx="3" fill="#1f1f1f" stroke="#4d4d4d" stroke-width="2.2"/>
<rect x="1670" y="27" width="25" height="24" rx="3" stroke="#bdbdbd" stroke-width="2.2" fill="none" stroke-linecap="round" stroke-linejoin="round"/><path d="M1678.3 27V51M1686.6 27V51M1670 35H1695M1670 43H1695" stroke="#bdbdbd" stroke-width="1.8" fill="none" stroke-linecap="round" stroke-linejoin="round"/>
<path d="M1731 26V30C1731 32 1732 33 1734 33H1755C1757 33 1758 32 1758 30V26M1731 51V47C1731 45 1732 44 1734 44H1755C1757 44 1758 45 1758 47V51" stroke="#bdbdbd" stroke-width="2.2" fill="none" stroke-linecap="round" stroke-linejoin="round"/><path d="M1735 38.5H1758" stroke="#bdbdbd" stroke-width="2" stroke-dasharray="3 2.5"/><path d="M1726 35L1731 38.5L1726 42Z" fill="#bdbdbd"/>
<rect x="1795.5" y="27" width="25" height="24" rx="3" stroke="#5fc24c" stroke-width="2.2" fill="none" stroke-linecap="round" stroke-linejoin="round"/><path d="M1808 30V44M1802 36H1814" stroke="#5fc24c" stroke-width="1.8" fill="none" stroke-linecap="round" stroke-linejoin="round"/><path d="M1803 40C1803 44 1806 46 1810 46" stroke="#6d8a6a" stroke-width="1.6" fill="none"/>
<path d="M1863 49V39C1863 32 1868 28 1873 28C1878 28 1883 32 1883 39V49" stroke="#5fc24c" stroke-width="2" fill="#4a8a40"/><path d="M1868 49V40C1868 36 1870 34 1873 34C1876 34 1878 36 1878 40V49" stroke="#5fc24c" stroke-width="2" fill="#1f1f1f"/><path d="M1863 44H1868M1878 44H1883" stroke="#5fc24c" stroke-width="1.8"/><path d="M1857 26V52" stroke="#5fc24c" stroke-width="2" fill="none" stroke-linecap="round" stroke-linejoin="round"/><circle cx="1857" cy="39" r="2.5" fill="#5fc24c"/>
<path d="M1925 49V39C1925 32 1930 28 1935 28C1940 28 1945 32 1945 39V49" stroke="#5fc24c" stroke-width="2" fill="#4a8a40"/><path d="M1930 49V40C1930 36 1932 34 1935 34C1938 34 1940 36 1940 40V49" stroke="#5fc24c" stroke-width="2" fill="#1f1f1f"/><path d="M1925 44H1930M1940 44H1945" stroke="#5fc24c" stroke-width="1.8"/><path d="M1919 26V52M1916 29L1919 26L1922 29M1916 49L1919 52L1922 49" stroke="#5fc24c" stroke-width="2" fill="none" stroke-linecap="round" stroke-linejoin="round"/><path d="M1916 36H1922M1916 42H1922" stroke="#5fc24c" stroke-width="1.6" fill="none" stroke-linecap="round" stroke-linejoin="round"/>
<path d="M1987 49V39C1987 32 1992 28 1997 28C2002 28 2007 32 2007 39V49" stroke="#5fc24c" stroke-width="2" fill="#4a8a40"/><path d="M1992 49V40C1992 36 1994 34 1997 34C2000 34 2002 36 2002 40V49" stroke="#5fc24c" stroke-width="2" fill="#1f1f1f"/><path d="M1987 44H1992M2002 44H2007" stroke="#5fc24c" stroke-width="1.8"/><path d="M1981 27V51M1981 27H2005" stroke="#5fc24c" stroke-width="2" fill="none" stroke-linecap="round" stroke-linejoin="round"/>
<rect x="2046" y="32" width="24" height="19" rx="2.5" stroke="#5fc24c" stroke-width="2.2" fill="none" stroke-linecap="round" stroke-linejoin="round"/><text x="2058" y="46.5" font-size="11" font-weight="bold" fill="#5fc24c" text-anchor="middle">XY</text><path d="M2043 24V30M2040 27H2046" stroke="#5fc24c" stroke-width="1.8" fill="none" stroke-linecap="round" stroke-linejoin="round"/>
<rect x="2112.5" y="18" width="145" height="42.5" rx="10" fill="#1d1d1d" stroke="#2c2c2c" stroke-width="1.2"/>
<rect x="2219.5" y="21" width="37" height="37" rx="8" fill="#292929"/>
<path d="M2232 36L2238 42L2244 36" stroke="#bdbdbd" stroke-width="2" fill="none" stroke-linecap="round" stroke-linejoin="round"/>
<text x="2139" y="45.4" font-size="20" fill="#f0f0f0" stroke="#f0f0f0" stroke-width="0.35" text-anchor="start" font-weight="normal" textLength="61" lengthAdjust="spacingAndGlyphs" >40.0%</text>
<path d="M2289 35H2286C2284.5 35 2283.5 36 2283.5 37.5V48.5C2283.5 50 2284.5 51 2286 51H2303C2304.5 51 2305.5 50 2305.5 48.5V37.5C2305.5 36 2304.5 35 2303 35H2300M2294.5 24V42M2289 29L2294.5 23.5L2300 29" stroke="#bdbdbd" stroke-width="2.2" fill="none" stroke-linecap="round" stroke-linejoin="round"/>
<rect x="2342" y="28" width="29" height="22" rx="3.5" stroke="#bdbdbd" stroke-width="2.2" fill="none" stroke-linecap="round" stroke-linejoin="round"/><path d="M2359 28V50" stroke="#bdbdbd" stroke-width="2.2" fill="none" stroke-linecap="round" stroke-linejoin="round"/><path d="M2363.5 33H2367.5M2363.5 37H2367.5M2363.5 41H2367.5M2363.5 45H2367.5" stroke="#bdbdbd" stroke-width="1.6" fill="none" stroke-linecap="round" stroke-linejoin="round"/>
<rect x="0" y="0" width="247" height="1381" fill="#2a2a2a"/>
<rect x="241" y="0" width="5" height="1381" fill="#282828"/>
<rect x="246.2" y="0" width="1.8" height="1381" fill="#050505"/>
<circle cx="39.5" cy="39.5" r="9.4" fill="#fe5f57" stroke="#b8423c" stroke-width="0.8"/>
<circle cx="71.5" cy="39.5" r="9.4" fill="#febc2e" stroke="#b88a1f" stroke-width="0.8"/>
<circle cx="103.5" cy="39.5" r="9.4" fill="#28c840" stroke="#1c8f2e" stroke-width="0.8"/>
<text x="23.5" y="108" font-size="20" fill="#a7a7a7" text-anchor="start" font-weight="bold" textLength="136" lengthAdjust="spacingAndGlyphs" >Drafting Tools</text>
<text x="23" y="651.5" font-size="20" fill="#a7a7a7" text-anchor="start" font-weight="bold" textLength="159" lengthAdjust="spacingAndGlyphs" >Dimension Tools</text>
<text x="23" y="889.5" font-size="20" fill="#a7a7a7" text-anchor="start" font-weight="bold" textLength="154" lengthAdjust="spacingAndGlyphs" >Advanced Tools</text>
<text x="23" y="1229.5" font-size="20" fill="#a7a7a7" text-anchor="start" font-weight="bold" textLength="156" lengthAdjust="spacingAndGlyphs" >Alignment Tools</text>
<text x="31" y="1274" font-size="17" fill="#9c9c9c" stroke="#9c9c9c" stroke-width="0.35" text-anchor="start" font-weight="normal" textLength="81" lengthAdjust="spacingAndGlyphs" >To object:</text>
<rect x="24" y="144.5" width="47.8" height="47.8" rx="4.5" fill="#5dbd4b" stroke="none" stroke-width="1"/>
<g transform="translate(47.8 168.4)"><path d="M-7 -13L-7 9L-2 4L2 13L6 11L2 3L9 3Z" fill="#f2fff0"/></g>
<g transform="translate(120.7 168.4)"><path d="M8 -5A11 11 0 1 0 -3 11" stroke="#fff" stroke-width="2.8" fill="none" stroke-linecap="round"/><path d="M3 -6L13 -6L8 3Z" fill="#fff"/></g>
<g transform="translate(193.9 168.4)"><path d="M-13 12V-10H10" stroke="#fff" stroke-width="2" fill="none"/><path d="M-13 12L12 -12" stroke="#fff" stroke-width="2"/><path d="M-13 12H4M10 -10V6" stroke="#fff" stroke-width="1.5" stroke-dasharray="2 2" fill="none"/><rect x="-16" y="9" width="6" height="6" fill="#fff"/><rect x="9" y="-15" width="6" height="6" fill="#fff"/><path d="M7 6V15M3 11H12" stroke="#fff" stroke-width="1.6"/><path d="M13 13L17 17L21 13" stroke="#fff" stroke-width="1.8" fill="none" stroke-linecap="round"/></g>
<g transform="translate(47.8 219.3)"><path d="M-11 -6L-3 3M-8 -10L1 0M-3 -12L4 -2M3 -10L7 -1L9 -6C12 -4 13 3 10 9C6 14 -2 14 -6 9L-14 2" stroke="#fff" stroke-width="2.4" fill="none" stroke-linecap="round" stroke-linejoin="round"/><path d="M-12 3L-6 -4L5 -6L9 -5C12 2 11 8 6 11C0 14 -4 11 -12 3Z" fill="#fff"/></g>
<g transform="translate(120.7 219.3)"><path d="M-13 13L13 -13" stroke="#fff" stroke-width="2.2" stroke-linecap="round"/><path d="M13 13L17 17L21 13" stroke="#fff" stroke-width="1.8" fill="none" stroke-linecap="round"/></g>
<g transform="translate(193.9 219.3)"><path d="M-14 -12L11 13M-5 -3L7 -15M-1 1L4 -4L8 0" stroke="#fff" stroke-width="2" fill="none"/><path d="M13 13L17 17L21 13" stroke="#fff" stroke-width="1.8" fill="none" stroke-linecap="round"/></g>
<g transform="translate(47.8 270)"><rect x="-14" y="-14" width="28" height="28" rx="2" fill="#6b6b6b" stroke="#fff" stroke-width="2.2"/></g>
<g transform="translate(120.7 270)"><text x="0" y="11" font-size="29" fill="#fff" text-anchor="middle" textLength="29" lengthAdjust="spacingAndGlyphs">Aa</text></g>
<g transform="translate(193.9 270)"><rect x="-14" y="-14" width="28" height="28" rx="7" fill="#6b6b6b" stroke="#fff" stroke-width="2.2"/><text x="0" y="7.5" font-size="19" fill="#fff" text-anchor="middle">P</text><path d="M13 14L17 18L21 14" stroke="#fff" stroke-width="1.8" fill="none" stroke-linecap="round"/></g>
<g transform="translate(47.8 321)"><circle cx="0" cy="0" r="13" fill="#6b6b6b" stroke="#fff" stroke-width="2.2"/><text x="0" y="7" font-size="18" fill="#fff" text-anchor="middle">D</text><path d="M13 14L17 18L21 14" stroke="#fff" stroke-width="1.8" fill="none" stroke-linecap="round"/></g>
<g transform="translate(120.7 321)"><ellipse cx="0" cy="1" rx="13" ry="9" fill="#6b6b6b" stroke="#fff" stroke-width="2.2"/><rect x="-15" y="-12" width="5" height="5" fill="#fff"/><rect x="10" y="9" width="5" height="5" fill="#fff"/></g>
<g transform="translate(193.9 321)"><circle cx="0" cy="0" r="13" fill="#6b6b6b" stroke="#fff" stroke-width="2.2"/><text x="0" y="7" font-size="18" fill="#fff" text-anchor="middle">R</text><rect x="7" y="-13" width="5" height="5" fill="#fff"/><rect x="-12" y="8" width="5" height="5" fill="#fff"/><path d="M13 14L17 18L21 14" stroke="#fff" stroke-width="1.8" fill="none" stroke-linecap="round"/></g>
<g transform="translate(47.8 372)"><path d="M-14 0L-7 -13H13L6 0L13 13H-7Z" fill="#6b6b6b" stroke="#fff" stroke-width="2.2" stroke-linejoin="round"/></g>
<g transform="translate(120.7 372)"><path d="M-14 6L-5 -6L7 6L14 -1" stroke="#fff" stroke-width="2.2" fill="none" stroke-linecap="round" stroke-linejoin="miter"/></g>
<g transform="translate(193.9 372)"><path d="M-10.5 12.5L12 -10" stroke="#6b6b6b" stroke-width="6"/><path d="M-14 9L9 -14M-8 15L15 -8" stroke="#fff" stroke-width="2.2" stroke-linecap="round"/><path d="M13 14L17 18L21 14" stroke="#fff" stroke-width="1.8" fill="none" stroke-linecap="round"/></g>
<g transform="translate(47.8 423)"><path d="M-13 -6L0 -13L13 -6V7L0 14L-13 7Z" fill="#6b6b6b" stroke="#fff" stroke-width="2.2"/><rect x="-16" y="-2" width="5" height="5" fill="#fff"/><rect x="11" y="-2" width="5" height="5" fill="#fff"/><path d="M13 14L17 18L21 14" stroke="#fff" stroke-width="1.8" fill="none" stroke-linecap="round"/></g>
<g transform="translate(120.7 423)"><path d="M-14 14C-6 14 -5 -4 0 -4C5 -4 6 14 14 14" stroke="#fff" stroke-width="2.2" fill="none"/><path d="M-12 -8H12" stroke="#fff" stroke-width="1.8"/><rect x="-15" y="-11" width="6" height="6" fill="#fff"/><rect x="-3" y="-12" width="6" height="7" fill="#fff"/><rect x="9" y="-11" width="6" height="6" fill="#fff"/></g>
<g transform="translate(193.9 423)"><path d="M-11 12C-11 -2 -6 -12 0 -12C6 -12 11 -2 11 12" stroke="#fff" stroke-width="2.2" fill="none"/><rect x="-14" y="9" width="6" height="6" fill="#fff"/><rect x="8" y="9" width="6" height="6" fill="#fff"/><rect x="-3" y="-15" width="6" height="6" fill="#fff"/></g>
<g transform="translate(47.8 474)"><path d="M-13 3C-8 -4 -4 -10 -2 -9C0 -8 -10 5 -8 6C-6 7 0 -4 2 -3C4 -2 -2 7 0 8C2 9 5 3 8 4C10 5 8 9 12 8" stroke="#fff" stroke-width="2.2" fill="none" stroke-linecap="round"/><path d="M13 12L17 16L21 12" stroke="#fff" stroke-width="1.8" fill="none" stroke-linecap="round"/></g>
<g transform="translate(120.7 474)"><path d="M-13 -7L-6 -13L0 -7L6 -13L13 -7L11 10H-11Z" fill="#6b6b6b" stroke="#fff" stroke-width="2.2" stroke-linejoin="round"/></g>
<g transform="translate(193.9 474)"><path d="M0 -14L4 -4L14 -4L6 3L9 13L0 7L-9 13L-6 3L-14 -4L-4 -4Z" fill="#6b6b6b" stroke="#fff" stroke-width="2.2" stroke-linejoin="round"/></g>
<g transform="translate(47.8 524.5)"><circle cx="-2" cy="-1" r="8" stroke="#fff" stroke-width="2.2" fill="none"/><path d="M-2 -14V12M-15 -1H11" stroke="#fff" stroke-width="2.2"/><path d="M2 4L2 18L6 14L9 18.5L11.5 17L8.5 12.5L14 12Z" fill="#fff" stroke="#2a2a2a" stroke-width="1.2"/></g>
<g transform="translate(120.7 524.5)"><circle cx="0" cy="-8" r="5" fill="#6b6b6b" stroke="#fff" stroke-width="2"/><path d="M-3 -3L-3 2H-13V9H13V2H3V-3" fill="#6b6b6b" stroke="#fff" stroke-width="2" stroke-linejoin="round"/><path d="M-13 13H13" stroke="#fff" stroke-width="2"/></g>
<g transform="translate(193.9 524.5)"><rect x="-14" y="-14" width="28" height="28" stroke="#fff" stroke-width="2" fill="none"/><path d="M-6 -9L3 0M3 -9L-6 0" stroke="#fff" stroke-width="1.8"/></g>
<g transform="translate(47.8 575.3)"><path d="M5 -11L11 -5L-6 12L-12 14L-10 8Z" fill="#6b6b6b" stroke="#fff" stroke-width="2" stroke-linejoin="round"/><path d="M3 -13C6 -16 9 -16 11 -14C13 -12 13 -9 10 -6Z" fill="#fff"/><path d="M1 -9L9 -1" stroke="#fff" stroke-width="2"/></g>
<g transform="translate(120.7 575.3)"><circle cx="-3" cy="-3" r="10" fill="#6b6b6b" stroke="#fff" stroke-width="2.2"/><path d="M4 4L12 12" stroke="#fff" stroke-width="4" stroke-linecap="round"/></g>
<g transform="translate(193.9 575.3)"><text x="0" y="9.5" font-size="25" fill="#fff" stroke="#fff" stroke-width="0.6" text-anchor="middle" textLength="30" lengthAdjust="spacingAndGlyphs">1:1</text></g>
<g transform="translate(47.8 711)"><path d="M-14 -9V9M14 -9V9M-13 0H13" stroke="#fff" stroke-width="2"/><path d="M-13 0L-7 -4V4Z M13 0L7 -4V4Z" fill="#fff"/></g>
<g transform="translate(120.7 711)"><path d="M-10 -14H10M-10 14H10M0 -13V13" stroke="#fff" stroke-width="2"/><path d="M0 -13L-4 -6H4Z M0 13L-4 6H4Z" fill="#fff"/></g>
<g transform="translate(193.9 711)"><path d="M-14 6L-6 14M6 -14L14 -6M-10 10L10 -10" stroke="#fff" stroke-width="2"/><path d="M-10 10L-9 3L-3 9Z M10 -10L3 -9L9 -3Z" fill="#fff"/></g>
<g transform="translate(47.8 762.3)"><path d="M-14 -4L5 15M6 -14L14 -5M-8 2L-3 7M-8 2L-2 -4L-6 -8M-2 -4L6 -12" stroke="#fff" stroke-width="2" fill="none"/><path d="M9 -13L1 -11L7 -5Z" fill="#fff"/></g>
<g transform="translate(120.7 762.3)"><circle cx="0" cy="0" r="13" stroke="#fff" stroke-width="2" fill="none"/><path d="M-7 7L7 -7" stroke="#fff" stroke-width="2"/><path d="M-8 8L-7 1L-1 7Z M8 -8L1 -7L7 -1Z" fill="#fff"/></g>
<g transform="translate(193.9 762.3)"><circle cx="0" cy="0" r="13" stroke="#fff" stroke-width="2" fill="none"/><path d="M0 0L7 -7" stroke="#fff" stroke-width="2"/><path d="M8 -8L1 -7L7 -1Z" fill="#fff"/></g>
<g transform="translate(47.8 813.4)"><circle cx="-2" cy="-1" r="8" stroke="#fff" stroke-width="2.2" fill="none"/><path d="M-2 -14V12M-15 -1H11" stroke="#fff" stroke-width="2.2"/><path d="M2 4L2 18L6 14L9 18.5L11.5 17L8.5 12.5L14 12Z" fill="#fff" stroke="#2a2a2a" stroke-width="1.2"/></g>
<g transform="translate(120.7 813.4)"><path d="M-13 11H13M-13 11L7 -12" stroke="#fff" stroke-width="2" fill="none"/><path d="M2 -5C6 -2 8 2 8 7" stroke="#fff" stroke-width="2" fill="none"/><path d="M8 11L4 4H12Z" fill="#fff"/></g>
<g transform="translate(47.8 949)"><path d="M-12 -14V14" stroke="#fff" stroke-width="2"/><rect x="-14.5" y="-4" width="5" height="6" fill="#fff"/><path d="M-6 -13L-6 8L-1 3L3 12L7 10L3 2L9 2Z" fill="#fff"/></g>
<g transform="translate(120.7 949)"><path d="M2 -13H-13V12H2M2 -15V14" stroke="#fff" stroke-width="2" fill="none"/><path d="M13 0H4" stroke="#fff" stroke-width="2"/><path d="M3 0L9 -4V4Z" fill="#fff"/></g>
<g transform="translate(193.9 949)"><path d="M2 -13H-13V12H2" stroke="#fff" stroke-width="2" fill="none"/><path d="M13 -15V14" stroke="#fff" stroke-width="2"/><path d="M3 -13V12" stroke="#888" stroke-width="2"/><path d="M4 0H11" stroke="#fff" stroke-width="2"/><path d="M11 0L5 -4V4Z" fill="#fff"/></g>
<g transform="translate(47.8 1001)"><path d="M-13 -13H0V-4H4C10 -4 13 -1 13 4V13H0V4H-4C-10 4 -13 1 -13 -4Z" fill="#6b6b6b" stroke="#fff" stroke-width="2.2" stroke-linejoin="round"/></g>
<g transform="translate(120.7 1001)"><rect x="-13" y="-13" width="17" height="17" rx="3" fill="#6b6b6b" stroke="#fff" stroke-width="2.2"/><rect x="-4" y="-4" width="17" height="17" rx="3" fill="#2a2a2a" stroke="#fff" stroke-width="2.2"/></g>
<g transform="translate(193.9 1001)"><path d="M-13 -14H13M-9 12C-6 0 2 -8 9 -9M9 -9V12" stroke="#fff" stroke-width="2" fill="none"/><rect x="-12" y="9" width="5" height="5" fill="#fff"/><rect x="6" y="9" width="5" height="5" fill="#fff"/></g>
<g transform="translate(47.8 1052)"><circle cx="-9" cy="-4" r="4.5" stroke="#fff" stroke-width="2" fill="none"/><circle cx="-9" cy="9" r="4.5" stroke="#fff" stroke-width="2" fill="none"/><path d="M-5 -2L13 7M-5 7L13 -2" stroke="#fff" stroke-width="3"/><rect x="-5" y="-15" width="5" height="5" fill="#fff"/><path d="M0 -12L4 -7" stroke="#fff" stroke-width="1.6"/></g>
<g transform="translate(120.7 1052)"><circle cx="-9" cy="-4" r="4.5" stroke="#fff" stroke-width="2" fill="none"/><circle cx="-9" cy="9" r="4.5" stroke="#fff" stroke-width="2" fill="none"/><path d="M-5 -2L13 7M-5 7L13 -2" stroke="#fff" stroke-width="3"/><text x="2" y="-6" font-size="12" fill="#fff" text-anchor="middle">M</text></g>
<g transform="translate(193.9 1052)"><path d="M-9 14V4C-9 -6 -2 -11 9 -11" stroke="#fff" stroke-width="2" fill="none"/><path d="M-12 -12V-4M-16 -8H-8" stroke="#888" stroke-width="1.5"/><rect x="4" y="2" width="6" height="6" fill="#fff"/></g>
<g transform="translate(47.8 1102.5)"><path d="M-9 14V2L1 -11H11" stroke="#fff" stroke-width="2" fill="none"/><path d="M-12 -12V-4M-16 -8H-8" stroke="#888" stroke-width="1.5"/><rect x="3" y="3" width="6" height="6" fill="#fff"/></g>
<g transform="translate(120.7 1102.5)"><path d="M-3 -10V12H-13Z M3 -10V12H13Z" stroke="#fff" stroke-width="2" fill="none" stroke-linejoin="round"/><path d="M0 -15V15" stroke="#888" stroke-width="2.5"/><path d="M3 -8V12H12Z" fill="#6b6b6b"/></g>
<g transform="translate(193.9 1102.5)"><g transform="rotate(-45)" stroke="#fff" stroke-width="2.6" fill="none"><rect x="-13" y="-5.5" width="15" height="11" rx="5.5"/><rect x="-2" y="-5.5" width="15" height="11" rx="5.5"/></g></g>
<g transform="translate(47.8 1153.5)"><g transform="rotate(-45)" stroke="#fff" stroke-width="2.6" fill="none"><rect x="-13" y="-5.5" width="15" height="11" rx="5.5"/><rect x="-2" y="-5.5" width="15" height="11" rx="5.5"/></g><circle cx="7" cy="8" r="6.5" fill="#fff" stroke="#2a2a2a" stroke-width="1.5"/><path d="M3.5 8H10.5" stroke="#2a2a2a" stroke-width="2"/></g>
<g transform="translate(120.7 1153.5)"><g transform="rotate(-45)" stroke="#fff" stroke-width="2.6" fill="none"><path d="M-4 -5.5H-8A5.5 5.5 0 0 0 -8 5.5H-4"/><path d="M4 -5.5H8A5.5 5.5 0 0 1 8 5.5H4"/></g><circle cx="-8" cy="-9" r="5.5" fill="#fff" stroke="#2a2a2a" stroke-width="1.5"/><path d="M-11 -9H-5" stroke="#2a2a2a" stroke-width="2"/><circle cx="8" cy="9" r="5.5" fill="#fff" stroke="#2a2a2a" stroke-width="1.5"/><path d="M5 9H11" stroke="#2a2a2a" stroke-width="2"/></g>
<g transform="translate(47.8 1309)"><path d="M-14 12H14" stroke="#fff" stroke-width="2.4"/><rect x="-10" y="-3" width="8" height="12" fill="none" stroke="#fff" stroke-width="2"/><rect x="2" y="-13" width="8" height="22" fill="#6b6b6b" stroke="#fff" stroke-width="2"/></g>
<g transform="translate(120.7 1309)"><path d="M-14 -13H14" stroke="#fff" stroke-width="2.4"/><rect x="-10" y="-9" width="8" height="12" fill="none" stroke="#fff" stroke-width="2"/><rect x="2" y="-9" width="8" height="22" fill="#6b6b6b" stroke="#fff" stroke-width="2"/></g>
<g transform="translate(193.9 1309)"><path d="M-14 0H14" stroke="#fff" stroke-width="2.4"/><rect x="-10" y="-8" width="8" height="16" fill="none" stroke="#fff" stroke-width="2"/><rect x="2" y="-13" width="8" height="26" fill="#6b6b6b" stroke="#fff" stroke-width="2"/></g>
<g transform="translate(47.8 1360)"><path d="M-13 -14V14" stroke="#fff" stroke-width="2.4"/><rect x="-9" y="-10" width="22" height="8" fill="#6b6b6b" stroke="#fff" stroke-width="2"/><rect x="-9" y="2" width="14" height="8" fill="none" stroke="#fff" stroke-width="2"/></g>
<g transform="translate(120.7 1360)"><path d="M13 -14V14" stroke="#fff" stroke-width="2.4"/><rect x="-13" y="-10" width="22" height="8" fill="#6b6b6b" stroke="#fff" stroke-width="2"/><rect x="-5" y="2" width="14" height="8" fill="none" stroke="#fff" stroke-width="2"/></g>
<g transform="translate(193.9 1360)"><path d="M0 -14V14" stroke="#fff" stroke-width="2.4"/><rect x="-8" y="-10" width="16" height="8" fill="none" stroke="#fff" stroke-width="2"/><rect x="-13" y="2" width="26" height="8" fill="#6b6b6b" stroke="#fff" stroke-width="2"/></g>
<rect x="1963" y="82" width="437" height="1299" fill="#252123"/>
<rect x="1962.5" y="82" width="2" height="1299" fill="#0b0b0b"/>
<g stroke="#5fc24c" stroke-width="2.2" fill="none" stroke-linecap="round"><path d="M2109.5 101H2137M2109.5 110.5H2137M2109.5 120H2137"/></g><g fill="#221f21" stroke="#5fc24c" stroke-width="2.2"><circle cx="2130" cy="101" r="3.5"/><circle cx="2117" cy="110.5" r="3.5"/><circle cx="2130" cy="120" r="3.5"/></g>
<path d="M2168 106L2182.5 98L2197 106L2182.5 114Z" fill="#5a5858" stroke="#bdbdbd" stroke-width="2" stroke-linejoin="round"/><path d="M2168 112L2182.5 120L2197 112M2168 118L2182.5 126L2197 118" stroke="#bdbdbd" stroke-width="2" fill="none" stroke-linejoin="round"/>
<g stroke="#bdbdbd" stroke-width="1.8" fill="none"><rect x="2229" y="97.0" width="7" height="7" rx="1"/><rect x="2239" y="97.0" width="7" height="7" rx="1"/><rect x="2249" y="97.0" width="7" height="7" rx="1"/><rect x="2229" y="106.7" width="7" height="7" rx="1"/><rect x="2239" y="106.7" width="7" height="7" rx="1"/><rect x="2249" y="106.7" width="7" height="7" rx="1"/><rect x="2229" y="116.4" width="7" height="7" rx="1"/><rect x="2239" y="116.4" width="7" height="7" rx="1"/><rect x="2249" y="116.4" width="7" height="7" rx="1"/></g>
<rect x="1965" y="138.65" width="435" height="1.5" fill="#423e40"/>
<text x="1996.7" y="184.3" font-size="18.2" fill="#ececec" stroke="#ececec" stroke-width="0.35" text-anchor="start" font-weight="normal" textLength="198" lengthAdjust="spacingAndGlyphs" >COLORS &amp; PATTERNS</text>
<path d="M2352 174.5L2358.5 181L2365 174.5" transform="translate(0 0)" stroke="#8a8a8a" stroke-width="2" fill="none" stroke-linecap="round"/>
<rect x="2031.3" y="211.5" width="151.7" height="34.4" rx="6.5" fill="#fdc02f" stroke="none" stroke-width="1"/>
<circle cx="2210" cy="228.7" r="13.5" fill="none" stroke="#c8c8c8" stroke-width="2"/><path d="M2210 215.2A13.5 13.5 0 0 1 2210 242.2Z" fill="#5c5a5b"/><path d="M2210 215.2V242.2" stroke="#c8c8c8" stroke-width="2"/>
<rect x="2231.6" y="213.1" width="134.7" height="31.2" rx="8" fill="#2b282a" stroke="#3d3b3c" stroke-width="1.2"/>
<text x="2247" y="236.7" font-size="20" fill="#f2f2f2" stroke="#f2f2f2" stroke-width="0.35" text-anchor="start" font-weight="normal" textLength="53" lengthAdjust="spacingAndGlyphs" >100%</text>
<rect x="2338" y="216.4" width="25.6" height="24.6" rx="5" fill="#5fc24c" stroke="none" stroke-width="1"/>
<path d="M2341.5 226.7H2360" stroke="#fff" stroke-width="1.6"/><circle cx="2350.8" cy="226.7" r="3.6" fill="#fff"/><path d="M2344.5 234.2V236.7M2350.8 234.2V236.7M2357 234.2V236.7" stroke="#fff" stroke-width="1.6"/>
<rect x="2031.3" y="269.1" width="151.7" height="34.4" rx="6.5" fill="#fc1d1b" stroke="none" stroke-width="1"/>
<circle cx="2210" cy="286.3" r="13.5" fill="none" stroke="#c8c8c8" stroke-width="2"/><path d="M2210 272.8A13.5 13.5 0 0 1 2210 299.8Z" fill="#5c5a5b"/><path d="M2210 272.8V299.8" stroke="#c8c8c8" stroke-width="2"/>
<rect x="2231.6" y="270.7" width="134.7" height="31.2" rx="8" fill="#2b282a" stroke="#3d3b3c" stroke-width="1.2"/>
<text x="2247" y="294.3" font-size="20" fill="#f2f2f2" stroke="#f2f2f2" stroke-width="0.35" text-anchor="start" font-weight="normal" textLength="53" lengthAdjust="spacingAndGlyphs" >100%</text>
<rect x="2338" y="274" width="25.6" height="24.6" rx="5" fill="#5fc24c" stroke="none" stroke-width="1"/>
<path d="M2341.5 284.3H2360" stroke="#fff" stroke-width="1.6"/><circle cx="2350.8" cy="284.3" r="3.6" fill="#fff"/><path d="M2344.5 291.8V294.3M2350.8 291.8V294.3M2357 291.8V294.3" stroke="#fff" stroke-width="1.6"/>
<rect x="2031.3" y="326.3" width="151.7" height="34.4" rx="6.5" fill="#8d8d8d" stroke="none" stroke-width="1"/>
<circle cx="2210" cy="343.5" r="13.5" fill="none" stroke="#c8c8c8" stroke-width="2"/><path d="M2210 330.0A13.5 13.5 0 0 1 2210 357.0Z" fill="#5c5a5b"/><path d="M2210 330.0V357.0" stroke="#c8c8c8" stroke-width="2"/>
<rect x="2231.6" y="327.9" width="134.7" height="31.2" rx="8" fill="#2b282a" stroke="#3d3b3c" stroke-width="1.2"/>
<text x="2247" y="351.5" font-size="20" fill="#f2f2f2" stroke="#f2f2f2" stroke-width="0.35" text-anchor="start" font-weight="normal" textLength="53" lengthAdjust="spacingAndGlyphs" >100%</text>
<rect x="2338" y="331.2" width="25.6" height="24.6" rx="5" fill="#5fc24c" stroke="none" stroke-width="1"/>
<path d="M2341.5 341.5H2360" stroke="#fff" stroke-width="1.6"/><circle cx="2350.8" cy="341.5" r="3.6" fill="#fff"/><path d="M2344.5 349.0V351.5M2350.8 349.0V351.5M2357 349.0V351.5" stroke="#fff" stroke-width="1.6"/>
<path d="M2010.5 214C2006 221 2002 227 2002 232C2002 237.5 2006 241 2010.5 241C2015 241 2019 237.5 2019 232C2019 227 2015 221 2010.5 214Z" fill="#5c5a5b" stroke="#c8c8c8" stroke-width="1.8"/>
<path d="M1996 290L2017 271M2004 299L2025 278" stroke="#c8c8c8" stroke-width="1.8" stroke-linecap="round"/>
<path d="M2016 328L2023 335L2004 354L1997 357L1999 349Z" fill="#5c5a5b" stroke="#c8c8c8" stroke-width="1.8" stroke-linejoin="round"/><path d="M2001 347L2006 352" stroke="#c8c8c8" stroke-width="1.6"/>
<rect x="1965" y="391.25" width="435" height="1.5" fill="#423e40"/>
<text x="1996.7" y="435.8" font-size="18.2" fill="#ececec" stroke="#ececec" stroke-width="0.35" text-anchor="start" font-weight="normal" textLength="231" lengthAdjust="spacingAndGlyphs" >STROKE &amp; LINE OPTIONS</text>
<path d="M2352 174.5L2358.5 181L2365 174.5" transform="translate(0 251.5)" stroke="#8a8a8a" stroke-width="2" fill="none" stroke-linecap="round"/>
<path d="M2011 467V495" stroke="#c8c8c8" stroke-width="1.8"/><path d="M1997 481H2006M2016 481H2025" stroke="#c8c8c8" stroke-width="1.8"/><path d="M2007 481L2002 477.5V484.5Z M2015 481L2020 477.5V484.5Z" fill="#c8c8c8"/>
<rect x="2033.6" y="465.5" width="146.7" height="32.1" rx="8" fill="#2b282a" stroke="#3d3b3c" stroke-width="1.2"/>
<text x="2093" y="489.5" font-size="20" fill="#f2f2f2" stroke="#f2f2f2" stroke-width="0.35" text-anchor="middle" font-weight="normal" >2H</text>
<rect x="2153" y="469" width="25" height="24.7" rx="5" fill="#5fc24c" stroke="none" stroke-width="1"/>
<path d="M2160 478L2165.5 484L2171 478" stroke="#fff" stroke-width="2.2" fill="none" stroke-linecap="round" stroke-linejoin="round"/>
<rect x="2196" y="465.5" width="172.3" height="32.1" rx="8" fill="#595758" stroke="none" stroke-width="1"/>
<path d="M2209 481H2307" stroke="#f0f0f0" stroke-width="1.6"/>
<text x="2313" y="489.5" font-size="20" fill="#f2f2f2" stroke="#f2f2f2" stroke-width="0.35" text-anchor="start" font-weight="normal" >P</text>
<rect x="2340" y="469" width="25" height="25" rx="5" fill="#5fc24c" stroke="none" stroke-width="1"/>
<path d="M2348.0 478.5L2352.5 473.5L2357.0 478.5M2348.0 484.5L2352.5 489.5L2357.0 484.5" stroke="#fff" stroke-width="2" fill="none" stroke-linecap="round" stroke-linejoin="round"/>
<rect x="1965" y="527.95" width="435" height="1.5" fill="#423e40"/>
<text x="1996.7" y="571.8" font-size="18.2" fill="#ececec" stroke="#ececec" stroke-width="0.35" text-anchor="start" font-weight="normal" textLength="110" lengthAdjust="spacingAndGlyphs" >END MARKS</text>
<path d="M2352 174.5L2358.5 181L2365 174.5" transform="translate(0 387.5)" stroke="#8a8a8a" stroke-width="2" fill="none" stroke-linecap="round"/>
<path d="M2025 618.5H2006" stroke="#c8c8c8" stroke-width="2"/><path d="M1997 618.5L2008 612.5V624.5Z" fill="#c8c8c8"/>
<rect x="2031.7" y="602.8" width="150.1" height="31.4" rx="8" fill="#595758" stroke="none" stroke-width="1"/>
<path d="M2076 618.5H2113" stroke="#f0f0f0" stroke-width="1.6"/>
<rect x="2154" y="606" width="25.8" height="25" rx="5" fill="#5fc24c" stroke="none" stroke-width="1"/>
<path d="M2162.4 615.5L2166.9 610.5L2171.4 615.5M2162.4 621.5L2166.9 626.5L2171.4 621.5" stroke="#fff" stroke-width="2" fill="none" stroke-linecap="round" stroke-linejoin="round"/>
<path d="M2200 627.5L2206 621.5M2214 613.5L2220 607.5" stroke="#c8c8c8" stroke-width="2"/><path d="M2197 631.5V622.5L2206 631.5Z M2223 604.5V613.5L2214 604.5Z" fill="#c8c8c8"/>
<rect x="2230.8" y="601.7" width="111.5" height="33.6" rx="5" fill="#3b393a" stroke="#4b494a" stroke-width="1.2"/>
<text x="2286.5" y="626" font-size="20" fill="#f2f2f2" stroke="#f2f2f2" stroke-width="0.35" text-anchor="middle" font-weight="normal" textLength="54" lengthAdjust="spacingAndGlyphs" >100%</text>
<rect x="2349.5" y="602" width="19.9" height="33" rx="7" fill="#4a4849" stroke="none" stroke-width="1"/>
<path d="M2355.5 613.5L2359.5 608.5L2363.5 613.5M2355.5 623.5L2359.5 628.5L2363.5 623.5" stroke="#e0e0e0" stroke-width="1.8" fill="none" stroke-linecap="round" stroke-linejoin="round"/>
<path d="M1997 675.4H2016" stroke="#c8c8c8" stroke-width="2"/><path d="M2025 675.4L2014 669.4V681.4Z" fill="#c8c8c8"/>
<rect x="2031.7" y="659.7" width="150.1" height="31.4" rx="8" fill="#595758" stroke="none" stroke-width="1"/>
<path d="M2076 675.4H2113" stroke="#f0f0f0" stroke-width="1.6"/>
<rect x="2154" y="662.9" width="25.8" height="25" rx="5" fill="#5fc24c" stroke="none" stroke-width="1"/>
<path d="M2162.4 672.4L2166.9 667.4L2171.4 672.4M2162.4 678.4L2166.9 683.4L2171.4 678.4" stroke="#fff" stroke-width="2" fill="none" stroke-linecap="round" stroke-linejoin="round"/>
<path d="M2200 684.4L2206 678.4M2214 670.4L2220 664.4" stroke="#c8c8c8" stroke-width="2"/><path d="M2197 688.4V679.4L2206 688.4Z M2223 661.4V670.4L2214 661.4Z" fill="#c8c8c8"/>
<rect x="2230.8" y="658.6" width="111.5" height="33.6" rx="5" fill="#3b393a" stroke="#4b494a" stroke-width="1.2"/>
<text x="2286.5" y="682.9" font-size="20" fill="#f2f2f2" stroke="#f2f2f2" stroke-width="0.35" text-anchor="middle" font-weight="normal" textLength="54" lengthAdjust="spacingAndGlyphs" >100%</text>
<rect x="2349.5" y="658.9" width="19.9" height="33" rx="7" fill="#4a4849" stroke="none" stroke-width="1"/>
<path d="M2355.5 670.4L2359.5 665.4L2363.5 670.4M2355.5 680.4L2359.5 685.4L2363.5 680.4" stroke="#e0e0e0" stroke-width="1.8" fill="none" stroke-linecap="round" stroke-linejoin="round"/>
<rect x="1965" y="724.25" width="435" height="1.5" fill="#423e40"/>
<text x="1996.7" y="771" font-size="18.2" fill="#ececec" stroke="#ececec" stroke-width="0.35" text-anchor="start" font-weight="normal" textLength="196" lengthAdjust="spacingAndGlyphs" >DIMENSION OPTIONS</text>
<path d="M2352 174.5L2358.5 181L2365 174.5" transform="translate(0 586.7)" stroke="#8a8a8a" stroke-width="2" fill="none" stroke-linecap="round"/>
<rect x="1993" y="798.8" width="381" height="35.9" rx="8" fill="#2b282a" stroke="#3a3839" stroke-width="1.2"/>
<rect x="1993" y="798.8" width="126.3" height="35.9" rx="8" fill="#5fc24c" stroke="none" stroke-width="1"/>
<text x="2056" y="823.5" font-size="20" fill="#f4fff2" stroke="#f4fff2" stroke-width="0.35" text-anchor="middle" font-weight="normal" textLength="58" lengthAdjust="spacingAndGlyphs" >Single</text>
<text x="2182" y="823.5" font-size="20" fill="#f2f2f2" stroke="#f2f2f2" stroke-width="0.35" text-anchor="middle" font-weight="normal" textLength="78" lengthAdjust="spacingAndGlyphs" >Chained</text>
<text x="2306.5" y="823.5" font-size="20" fill="#f2f2f2" stroke="#f2f2f2" stroke-width="0.35" text-anchor="middle" font-weight="normal" textLength="80" lengthAdjust="spacingAndGlyphs" >Baseline</text>
<text x="1997" y="879.7" font-size="20" fill="#9d9b9c" stroke="#9d9b9c" stroke-width="0.35" text-anchor="start" font-weight="normal" textLength="206" lengthAdjust="spacingAndGlyphs" >Dimension End Marks</text>
<path d="M2025 924.3H2006" stroke="#c8c8c8" stroke-width="2"/><path d="M1997 924.3L2008 918.3V930.3Z" fill="#c8c8c8"/>
<rect x="2031.7" y="908.6" width="150.1" height="31.4" rx="8" fill="#595758" stroke="none" stroke-width="1"/>
<path d="M2090 924.3H2113" stroke="#f0f0f0" stroke-width="2"/><path d="M2076 924.3L2092 918.3V930.3Z" fill="#f0f0f0"/>
<rect x="2154" y="911.8" width="25.8" height="25" rx="5" fill="#5fc24c" stroke="none" stroke-width="1"/>
<path d="M2162.4 921.3L2166.9 916.3L2171.4 921.3M2162.4 927.3L2166.9 932.3L2171.4 927.3" stroke="#fff" stroke-width="2" fill="none" stroke-linecap="round" stroke-linejoin="round"/>
<path d="M2200 933.3L2206 927.3M2214 919.3L2220 913.3" stroke="#c8c8c8" stroke-width="2"/><path d="M2197 937.3V928.3L2206 937.3Z M2223 910.3V919.3L2214 910.3Z" fill="#c8c8c8"/>
<rect x="2230.8" y="907.5" width="111.5" height="33.6" rx="5" fill="#3b393a" stroke="#4b494a" stroke-width="1.2"/>
<text x="2286.5" y="931.8" font-size="20" fill="#f2f2f2" stroke="#f2f2f2" stroke-width="0.35" text-anchor="middle" font-weight="normal" textLength="54" lengthAdjust="spacingAndGlyphs" >150%</text>
<rect x="2349.5" y="907.8" width="19.9" height="33" rx="7" fill="#4a4849" stroke="none" stroke-width="1"/>
<path d="M2355.5 919.3L2359.5 914.3L2363.5 919.3M2355.5 929.3L2359.5 934.3L2363.5 929.3" stroke="#e0e0e0" stroke-width="1.8" fill="none" stroke-linecap="round" stroke-linejoin="round"/>
<path d="M1997 982H2016" stroke="#c8c8c8" stroke-width="2"/><path d="M2025 982L2014 976V988Z" fill="#c8c8c8"/>
<rect x="2031.7" y="966.3" width="150.1" height="31.4" rx="8" fill="#595758" stroke="none" stroke-width="1"/>
<path d="M2076 982H2099" stroke="#f0f0f0" stroke-width="2"/><path d="M2113 982L2097 976V988Z" fill="#f0f0f0"/>
<rect x="2154" y="969.5" width="25.8" height="25" rx="5" fill="#5fc24c" stroke="none" stroke-width="1"/>
<path d="M2162.4 979L2166.9 974L2171.4 979M2162.4 985L2166.9 990L2171.4 985" stroke="#fff" stroke-width="2" fill="none" stroke-linecap="round" stroke-linejoin="round"/>
<path d="M2200 991L2206 985M2214 977L2220 971" stroke="#c8c8c8" stroke-width="2"/><path d="M2197 995V986L2206 995Z M2223 968V977L2214 968Z" fill="#c8c8c8"/>
<rect x="2230.8" y="965.2" width="111.5" height="33.6" rx="5" fill="#3b393a" stroke="#4b494a" stroke-width="1.2"/>
<text x="2286.5" y="989.5" font-size="20" fill="#f2f2f2" stroke="#f2f2f2" stroke-width="0.35" text-anchor="middle" font-weight="normal" textLength="54" lengthAdjust="spacingAndGlyphs" >150%</text>
<rect x="2349.5" y="965.5" width="19.9" height="33" rx="7" fill="#4a4849" stroke="none" stroke-width="1"/>
<path d="M2355.5 977L2359.5 972L2363.5 977M2355.5 987L2359.5 992L2363.5 987" stroke="#e0e0e0" stroke-width="1.8" fill="none" stroke-linecap="round" stroke-linejoin="round"/>
<rect x="1996.6" y="1023.8" width="372.8" height="31.1" rx="7" fill="#595758" stroke="none" stroke-width="1"/>
<text x="2183" y="1046" font-size="20" fill="#f2f2f2" stroke="#f2f2f2" stroke-width="0.35" text-anchor="middle" font-weight="normal" textLength="86" lengthAdjust="spacingAndGlyphs" >Format...</text>
<rect x="1965" y="1089.75" width="435" height="1.5" fill="#423e40"/>
<text x="1996.7" y="1136.7" font-size="18.2" fill="#ececec" stroke="#ececec" stroke-width="0.35" text-anchor="start" font-weight="normal" textLength="137" lengthAdjust="spacingAndGlyphs" >TEXT OPTIONS</text>
<path d="M2352 174.5L2358.5 181L2365 174.5" transform="translate(0 952.4)" stroke="#8a8a8a" stroke-width="2" fill="none" stroke-linecap="round"/>
<rect x="1996.6" y="1167" width="218.8" height="30.7" rx="8" fill="#595758" stroke="none" stroke-width="1"/>
<text x="2009" y="1189.5" font-size="20" fill="#f2f2f2" stroke="#f2f2f2" stroke-width="0.35" text-anchor="start" font-weight="normal" textLength="139.5" lengthAdjust="spacingAndGlyphs" >Lucida Grande</text>
<rect x="2186.6" y="1169.8" width="26.2" height="25" rx="5" fill="#5fc24c" stroke="none" stroke-width="1"/>
<path d="M2195.2 1179.3L2199.7 1174.3L2204.2 1179.3M2195.2 1185.3L2199.7 1190.3L2204.2 1185.3" stroke="#fff" stroke-width="2" fill="none" stroke-linecap="round" stroke-linejoin="round"/>
<rect x="2232.4" y="1167" width="136.2" height="30.7" rx="8" fill="#595758" stroke="none" stroke-width="1"/>
<text x="2245.5" y="1189.5" font-size="20" fill="#f2f2f2" stroke="#f2f2f2" stroke-width="0.35" text-anchor="start" font-weight="normal" textLength="72" lengthAdjust="spacingAndGlyphs" >Regular</text>
<rect x="2340" y="1169.8" width="26" height="25" rx="5" fill="#5fc24c" stroke="none" stroke-width="1"/>
<path d="M2348.5 1179.3L2353.0 1174.3L2357.5 1179.3M2348.5 1185.3L2353.0 1190.3L2357.5 1185.3" stroke="#fff" stroke-width="2" fill="none" stroke-linecap="round" stroke-linejoin="round"/>
<text x="1996" y="1251" font-size="17" fill="#c8c8c8" stroke="#c8c8c8" stroke-width="0.35" text-anchor="start" font-weight="normal" >A</text>
<text x="2007" y="1251" font-size="24" fill="#c8c8c8" stroke="#c8c8c8" stroke-width="0.35" text-anchor="start" font-weight="normal" >A</text>
<rect x="2031.5" y="1223.8" width="118.1" height="34.9" rx="6" fill="#3b393a" stroke="#4b494a" stroke-width="1.2"/>
<text x="2090.5" y="1249.5" font-size="20" fill="#f2f2f2" stroke="#f2f2f2" stroke-width="0.35" text-anchor="middle" font-weight="normal" textLength="48" lengthAdjust="spacingAndGlyphs" >18 pt</text>
<rect x="2156" y="1225" width="20" height="32" rx="7" fill="#4a4849" stroke="none" stroke-width="1"/>
<path d="M2162 1236L2166 1231L2170 1236M2162 1246L2166 1251L2170 1246" stroke="#e0e0e0" stroke-width="1.8" fill="none" stroke-linecap="round" stroke-linejoin="round"/>
<path d="M2202.5 1230V1252M2198.5 1234L2202.5 1229L2206.5 1234M2198.5 1248L2202.5 1253L2206.5 1248" stroke="#c8c8c8" stroke-width="2" fill="none"/><path d="M2211 1229H2225M2211 1240.5H2225M2211 1252H2225" stroke="#c8c8c8" stroke-width="1.8"/>
<rect x="2232.4" y="1223.8" width="136.2" height="31.6" rx="8" fill="#595758" stroke="none" stroke-width="1"/>
<text x="2245.5" y="1246.5" font-size="20" fill="#f2f2f2" stroke="#f2f2f2" stroke-width="0.35" text-anchor="start" font-weight="normal" textLength="62" lengthAdjust="spacingAndGlyphs" >Single</text>
<rect x="2340" y="1227.1" width="26" height="25" rx="5" fill="#5fc24c" stroke="none" stroke-width="1"/>
<path d="M2348.5 1236.6L2353.0 1231.6L2357.5 1236.6M2348.5 1242.6L2353.0 1247.6L2357.5 1242.6" stroke="#fff" stroke-width="2" fill="none" stroke-linecap="round" stroke-linejoin="round"/>
<rect x="1996" y="1286" width="22.8" height="21.7" rx="4.5" fill="#5fc24c" stroke="none" stroke-width="1"/>
<path d="M2001 1297L2006 1302.5L2014 1291" stroke="#fff" stroke-width="2.6" fill="none" stroke-linecap="round" stroke-linejoin="round"/>
<text x="2028.6" y="1304.5" font-size="21" fill="#f2f2f2" stroke="#f2f2f2" stroke-width="0.35" text-anchor="start" font-weight="normal" textLength="211.5" lengthAdjust="spacingAndGlyphs" >Highlight Clipped Text</text>
<rect x="1997" y="1335.25" width="373" height="1.5" fill="#423e40"/>
<text x="1997" y="1383" font-size="20" fill="#9d9b9c" stroke="#9d9b9c" stroke-width="0.35" text-anchor="start" font-weight="normal" textLength="141" lengthAdjust="spacingAndGlyphs" >Text Alignment</text>
</g>
<path d="M0.5 15.5A15 15 0 0 1 15.5 0.5M2384.5 0.5A15 15 0 0 1 2399.5 15.5M2399.5 1365.5A15 15 0 0 1 2384.5 1380.5M15.5 1380.5A15 15 0 0 1 0.5 1365.5" fill="none" stroke="#0a0a0a" stroke-width="1.2"/>
</svg></body></html>
